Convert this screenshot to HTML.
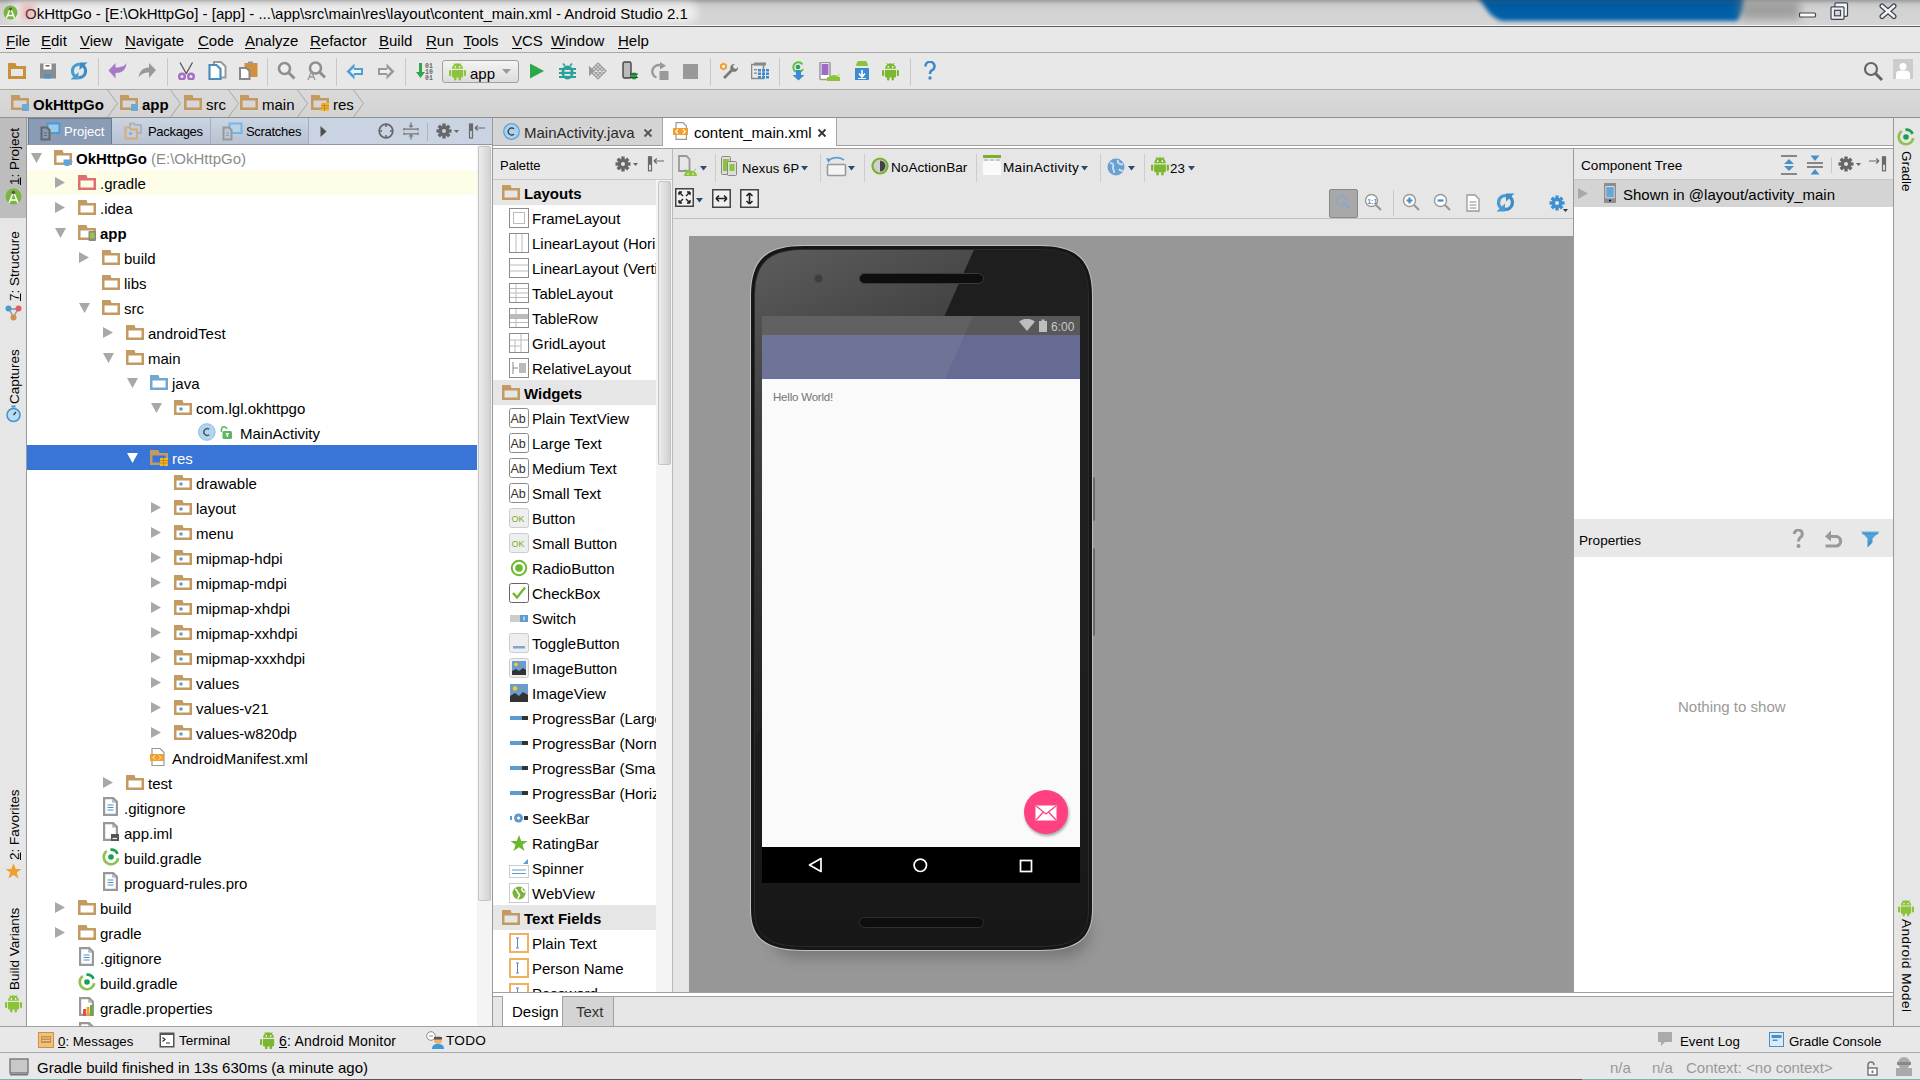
<!DOCTYPE html>
<html><head><meta charset="utf-8"><style>
html,body{margin:0;padding:0;width:1920px;height:1080px;overflow:hidden;background:#e8e8e8;font-family:"Liberation Sans", sans-serif;position:relative}
div,svg{box-sizing:border-box}
</style></head><body>
<div style="position:absolute;left:0px;top:0px;width:1920px;height:25px;background:linear-gradient(#9c9c9c,#c8c8c8 4px,#d2d2d2 9px,#d5d5d5)"></div><div style="position:absolute;left:8px;top:3px;width:690px;height:20px;background:#ededed;filter:blur(4px);border-radius:10px"></div><svg style="position:absolute;left:1465px;top:0px" width="295" height="28" viewBox="0 0 295 28"><defs><filter id="bl" x="-10%" y="-50%" width="120%" height="200%"><feGaussianBlur stdDeviation="2.2"/></filter><linearGradient id="bg1" x1="0" y1="0" x2="0" y2="1"><stop offset="0" stop-color="#1d4f7c"/><stop offset="0.35" stop-color="#065ca2"/><stop offset="1" stop-color="#0660aa"/></linearGradient></defs><path d="M12 -4H278Q281 10 272 21H38Q28 19 22 10Z" fill="url(#bg1)" filter="url(#bl)"/></svg><div style="position:absolute;left:1740px;top:0px;width:60px;height:20px;background:#8a8a8a;filter:blur(5px);opacity:.7"></div><div style="position:absolute;left:0px;top:25px;width:1920px;height:1px;background:#f4f4f4"></div><div style="position:absolute;left:0px;top:26px;width:1920px;height:1px;background:#5c5c5c"></div><div style="position:absolute;left:25px;top:6.30px;font-size:15px;line-height:15px;color:#000;font-weight:400;white-space:pre;">OkHttpGo - [E:\OkHttpGo] - [app] - ...\app\src\main\res\layout\content_main.xml - Android Studio 2.1</div><svg style="position:absolute;left:3px;top:5px" width="15" height="15" viewBox="0 0 15 15"><circle cx="7.5" cy="7.5" r="7" fill="#7ab53e"/><path d="M7.5 3L3.5 13M7.5 3L11.5 13M4.5 10.5H10.5" stroke="#fff" stroke-width="1.3" fill="none"/><circle cx="7.5" cy="4" r="1.6" fill="#555"/></svg><div style="position:absolute;left:21px;top:4px;width:14px;height:16px;background:#e88080;filter:blur(3px);opacity:.45"></div><svg style="position:absolute;left:1797px;top:11px" width="20" height="8" viewBox="0 0 20 8"><rect x="2.5" y="2" width="16" height="4" rx="1" fill="#fafafa" stroke="#3c4458" stroke-width="1.2"/></svg><svg style="position:absolute;left:1829px;top:1px" width="22" height="20" viewBox="0 0 22 20"><rect x="6" y="1.8" width="12.5" height="13.5" rx="1" fill="#f6f6f6" stroke="#3c4458" stroke-width="1.2"/><rect x="2" y="5.8" width="13" height="12.5" rx="1" fill="#f0f0f0" stroke="#3c4458" stroke-width="1.2"/><rect x="5.5" y="9.3" width="6" height="5.5" fill="#d8d8d8" stroke="#3c4458" stroke-width="1.2"/></svg><svg style="position:absolute;left:1876px;top:2px" width="24" height="18" viewBox="0 0 24 18"><path d="M6 4L18 14.5M18 4L6 14.5" stroke="#3c4458" stroke-width="5" stroke-linecap="round"/><path d="M6 4L18 14.5M18 4L6 14.5" stroke="#f4f4f4" stroke-width="2.6" stroke-linecap="round"/></svg><div style="position:absolute;left:0px;top:27px;width:1920px;height:25px;background:#e8e8e8"></div><div style="position:absolute;left:0px;top:52px;width:1920px;height:1px;background:#a8a8a8"></div><div style="position:absolute;left:6px;top:33.30px;font-size:15px;line-height:15px;color:#000;font-weight:400;white-space:pre;"><u style="text-decoration-thickness:1px;text-underline-offset:2px">F</u>ile</div><div style="position:absolute;left:41px;top:33.30px;font-size:15px;line-height:15px;color:#000;font-weight:400;white-space:pre;"><u style="text-decoration-thickness:1px;text-underline-offset:2px">E</u>dit</div><div style="position:absolute;left:80px;top:33.30px;font-size:15px;line-height:15px;color:#000;font-weight:400;white-space:pre;"><u style="text-decoration-thickness:1px;text-underline-offset:2px">V</u>iew</div><div style="position:absolute;left:125px;top:33.30px;font-size:15px;line-height:15px;color:#000;font-weight:400;white-space:pre;"><u style="text-decoration-thickness:1px;text-underline-offset:2px">N</u>avigate</div><div style="position:absolute;left:198px;top:33.30px;font-size:15px;line-height:15px;color:#000;font-weight:400;white-space:pre;"><u style="text-decoration-thickness:1px;text-underline-offset:2px">C</u>ode</div><div style="position:absolute;left:245px;top:33.30px;font-size:15px;line-height:15px;color:#000;font-weight:400;white-space:pre;"><u style="text-decoration-thickness:1px;text-underline-offset:2px">A</u>nalyze</div><div style="position:absolute;left:310px;top:33.30px;font-size:15px;line-height:15px;color:#000;font-weight:400;white-space:pre;"><u style="text-decoration-thickness:1px;text-underline-offset:2px">R</u>efactor</div><div style="position:absolute;left:379px;top:33.30px;font-size:15px;line-height:15px;color:#000;font-weight:400;white-space:pre;"><u style="text-decoration-thickness:1px;text-underline-offset:2px">B</u>uild</div><div style="position:absolute;left:426px;top:33.30px;font-size:15px;line-height:15px;color:#000;font-weight:400;white-space:pre;"><u style="text-decoration-thickness:1px;text-underline-offset:2px">R</u>un</div><div style="position:absolute;left:463.5px;top:33.30px;font-size:15px;line-height:15px;color:#000;font-weight:400;white-space:pre;"><u style="text-decoration-thickness:1px;text-underline-offset:2px">T</u>ools</div><div style="position:absolute;left:512px;top:33.30px;font-size:15px;line-height:15px;color:#000;font-weight:400;white-space:pre;"><u style="text-decoration-thickness:1px;text-underline-offset:2px">V</u>CS</div><div style="position:absolute;left:551px;top:33.30px;font-size:15px;line-height:15px;color:#000;font-weight:400;white-space:pre;"><u style="text-decoration-thickness:1px;text-underline-offset:2px">W</u>indow</div><div style="position:absolute;left:618px;top:33.30px;font-size:15px;line-height:15px;color:#000;font-weight:400;white-space:pre;"><u style="text-decoration-thickness:1px;text-underline-offset:2px">H</u>elp</div><div style="position:absolute;left:0px;top:53px;width:1920px;height:36px;background:#e8e8e8"></div><div style="position:absolute;left:0px;top:89px;width:1920px;height:1px;background:#a8a8a8"></div><div style="position:absolute;left:98px;top:58px;width:1px;height:28px;background:#c8c8c8"></div><div style="position:absolute;left:167px;top:58px;width:1px;height:28px;background:#c8c8c8"></div><div style="position:absolute;left:267px;top:58px;width:1px;height:28px;background:#c8c8c8"></div><div style="position:absolute;left:336px;top:58px;width:1px;height:28px;background:#c8c8c8"></div><div style="position:absolute;left:405px;top:58px;width:1px;height:28px;background:#c8c8c8"></div><div style="position:absolute;left:710px;top:58px;width:1px;height:28px;background:#c8c8c8"></div><div style="position:absolute;left:779px;top:58px;width:1px;height:28px;background:#c8c8c8"></div><div style="position:absolute;left:910px;top:58px;width:1px;height:28px;background:#c8c8c8"></div><div style="position:absolute;left:0px;top:90px;width:1920px;height:27px;background:linear-gradient(#dadada,#d3d3d3)"></div><div style="position:absolute;left:0px;top:117px;width:1920px;height:1px;background:#8f8f8f"></div><div style="position:absolute;left:0px;top:118px;width:26px;height:908px;background:#e6e6e6"></div><div style="position:absolute;left:0px;top:118px;width:26px;height:100px;background:#bdbdbd"></div><div style="position:absolute;left:26px;top:118px;width:1px;height:908px;background:#9a9a9a"></div><div style="position:absolute;left:1894px;top:118px;width:26px;height:908px;background:#e6e6e6"></div><div style="position:absolute;left:1893px;top:118px;width:1px;height:908px;background:#9a9a9a"></div><div style="position:absolute;left:27px;top:118px;width:466px;height:27px;background:#c9d3e2"></div><div style="position:absolute;left:27px;top:144px;width:466px;height:1px;background:#8e98a8"></div><div style="position:absolute;left:28px;top:118px;width:84px;height:26px;background:#8a9bb6;border:1px solid #6b7a93;border-bottom:none"></div><div style="position:absolute;left:112px;top:118px;width:99px;height:26px;background:linear-gradient(#cbd4e2,#b8c2d2);border-right:1px solid #a3adbd"></div><div style="position:absolute;left:211px;top:118px;width:98px;height:26px;background:linear-gradient(#cbd4e2,#b8c2d2);border-right:1px solid #a3adbd"></div><div style="position:absolute;left:64px;top:125.00px;font-size:13px;line-height:13px;color:#fff;font-weight:400;white-space:pre;">Project</div><div style="position:absolute;left:148px;top:125.00px;font-size:13px;line-height:13px;color:#000;font-weight:400;white-space:pre;letter-spacing:-0.3px">Packages</div><div style="position:absolute;left:246px;top:125.00px;font-size:13px;line-height:13px;color:#000;font-weight:400;white-space:pre;letter-spacing:-0.3px">Scratches</div><div style="position:absolute;left:27px;top:145px;width:450px;height:881px;background:#fff"></div><div style="position:absolute;left:477px;top:145px;width:15px;height:881px;background:#f4f4f4"></div><div style="position:absolute;left:478px;top:146px;width:13px;height:755px;background:linear-gradient(90deg,#ececec,#d2d2d2);border:1px solid #c4c4c4;border-radius:2px"></div><div style="position:absolute;left:492px;top:118px;width:1px;height:908px;background:#9a9a9a"></div><div style="position:absolute;left:493px;top:118px;width:1400px;height:28px;background:#e6e6e6"></div><div style="position:absolute;left:493px;top:145px;width:1400px;height:1px;background:#a0a0a0"></div><div style="position:absolute;left:493px;top:118px;width:170px;height:27px;background:#d4d4d4;border-right:1px solid #a8a8a8"></div><div style="position:absolute;left:663px;top:118px;width:174px;height:28px;background:#fff;border-right:1px solid #a8a8a8"></div><div style="position:absolute;left:524px;top:125.30px;font-size:15px;line-height:15px;color:#2a2a2a;font-weight:400;white-space:pre;">MainActivity.java</div><div style="position:absolute;left:694px;top:125.30px;font-size:15px;line-height:15px;color:#000;font-weight:400;white-space:pre;">content_main.xml</div><div style="position:absolute;left:493px;top:146px;width:1400px;height:2px;background:#fff"></div><div style="position:absolute;left:493px;top:148px;width:1400px;height:1px;background:#a0a0a0"></div><div style="position:absolute;left:493px;top:149px;width:180px;height:31px;background:#e8e8e8"></div><div style="position:absolute;left:493px;top:179px;width:180px;height:1px;background:#c8c8c8"></div><div style="position:absolute;left:500px;top:159.00px;font-size:13px;line-height:13px;color:#000;font-weight:400;white-space:pre;">Palette</div><div style="position:absolute;left:493px;top:180px;width:163px;height:812px;background:#fff"></div><div style="position:absolute;left:656px;top:180px;width:16px;height:812px;background:#f4f4f4"></div><div style="position:absolute;left:658px;top:181px;width:13px;height:284px;background:linear-gradient(90deg,#ececec,#d0d0d0);border:1px solid #c4c4c4;border-radius:2px"></div><div style="position:absolute;left:672px;top:149px;width:1px;height:844px;background:#b8b8b8"></div><div style="position:absolute;left:673px;top:149px;width:900px;height:844px;background:#e6e6e6"></div><div style="position:absolute;left:673px;top:218px;width:900px;height:1px;background:#c0c0c0"></div><div style="position:absolute;left:689px;top:236px;width:884px;height:756px;background:#979797"></div><div style="position:absolute;left:1573px;top:149px;width:1px;height:844px;background:#9a9a9a"></div><div style="position:absolute;left:1574px;top:149px;width:319px;height:30px;background:#e8e8e8"></div><div style="position:absolute;left:1574px;top:179px;width:319px;height:1px;background:#c8c8c8"></div><div style="position:absolute;left:1581px;top:159.49px;font-size:13.6px;line-height:13.6px;color:#000;font-weight:400;white-space:pre;">Component Tree</div><div style="position:absolute;left:1574px;top:180px;width:319px;height:339px;background:#fff"></div><div style="position:absolute;left:1574px;top:180px;width:319px;height:27px;background:#d4d4d4"></div><div style="position:absolute;left:1623px;top:187.30px;font-size:15px;line-height:15px;color:#000;font-weight:400;white-space:pre;">Shown in @layout/activity_main</div><div style="position:absolute;left:1574px;top:519px;width:319px;height:38px;background:#e8e8e8"></div><div style="position:absolute;left:1579px;top:533.99px;font-size:13.6px;line-height:13.6px;color:#000;font-weight:400;white-space:pre;">Properties</div><div style="position:absolute;left:1574px;top:557px;width:319px;height:435px;background:#fff"></div><div style="position:absolute;left:1678px;top:699.30px;font-size:15px;line-height:15px;color:#999;font-weight:400;white-space:pre;">Nothing to show</div><div style="position:absolute;left:493px;top:992px;width:1400px;height:1px;background:#a0a0a0"></div><div style="position:absolute;left:493px;top:993px;width:1400px;height:4px;background:#fff"></div><div style="position:absolute;left:493px;top:996px;width:1400px;height:1px;background:#a0a0a0"></div><div style="position:absolute;left:493px;top:997px;width:1400px;height:29px;background:#e6e6e6"></div><div style="position:absolute;left:502px;top:996px;width:61px;height:30px;background:#fff;border-left:1px solid #a0a0a0;border-right:1px solid #a0a0a0"></div><div style="position:absolute;left:562px;top:996px;width:52px;height:30px;background:#d4d4d4;border:1px solid #a0a0a0;border-bottom:none"></div><div style="position:absolute;left:512px;top:1004.30px;font-size:15px;line-height:15px;color:#000;font-weight:400;white-space:pre;">Design</div><div style="position:absolute;left:576px;top:1004.30px;font-size:15px;line-height:15px;color:#333;font-weight:400;white-space:pre;">Text</div><div style="position:absolute;left:0px;top:1026px;width:1920px;height:1px;background:#a0a0a0"></div><div style="position:absolute;left:0px;top:1027px;width:1920px;height:25px;background:#e8e8e8"></div><div style="position:absolute;left:0px;top:1052px;width:1920px;height:1px;background:#a8a8a8"></div><div style="position:absolute;left:58px;top:1034.74px;font-size:13.3px;line-height:13.3px;color:#000;font-weight:400;white-space:pre;"><u>0</u>: Messages</div><div style="position:absolute;left:179px;top:1034.49px;font-size:13.6px;line-height:13.6px;color:#000;font-weight:400;white-space:pre;">Terminal</div><div style="position:absolute;left:279px;top:1034.15px;font-size:14px;line-height:14px;color:#000;font-weight:400;white-space:pre;letter-spacing:0.2px"><u>6</u>: Android Monitor</div><div style="position:absolute;left:446px;top:1034.49px;font-size:13.6px;line-height:13.6px;color:#000;font-weight:400;white-space:pre;letter-spacing:0.3px">TODO</div><div style="position:absolute;left:1680px;top:1034.74px;font-size:13.3px;line-height:13.3px;color:#000;font-weight:400;white-space:pre;">Event Log</div><div style="position:absolute;left:1789px;top:1034.74px;font-size:13.3px;line-height:13.3px;color:#000;font-weight:400;white-space:pre;">Gradle Console</div><div style="position:absolute;left:0px;top:1053px;width:1920px;height:27px;background:#e8e8e8"></div><div style="position:absolute;left:37px;top:1060.30px;font-size:15px;line-height:15px;color:#000;font-weight:400;white-space:pre;">Gradle build finished in 13s 630ms (a minute ago)</div><div style="position:absolute;left:1610px;top:1060.30px;font-size:15px;line-height:15px;color:#999;font-weight:400;white-space:pre;">n/a</div><div style="position:absolute;left:1652px;top:1060.30px;font-size:15px;line-height:15px;color:#999;font-weight:400;white-space:pre;">n/a</div><div style="position:absolute;left:1686px;top:1060.30px;font-size:15px;line-height:15px;color:#999;font-weight:400;white-space:pre;">Context: &lt;no context&gt;</div><div style="position:absolute;left:0;top:0;width:477px;height:1026px;overflow:hidden"><svg style="position:absolute;left:30.5px;top:153px" width="11" height="10" viewBox="0 0 11 10"><path fill="#a8a8a8" d="M0 0H11L5.5 10Z"/></svg><svg style="position:absolute;left:54px;top:150px" width="20" height="18" viewBox="0 0 20 18"><path fill-rule="evenodd" fill="#c49a63" d="M0 0H8.5L9.5 3H18V15H0Z M2.5 5.5V12.5H15.5V5.5Z"/><path d="M9.5 9.5h7v3.5a3 3 0 0 1-3 3h-1a3 3 0 0 1-3-3z" fill="#5aa6dc"/><circle cx="16.5" cy="11.5" r="1.5" fill="none" stroke="#5aa6dc" stroke-width="1"/></svg><div style="position:absolute;left:76px;top:151.30px;font-size:15px;line-height:15px;color:#000;font-weight:400;white-space:pre;"><b>OkHttpGo</b><span style="color:#8c8c8c"> (E:\OkHttpGo)</span></div><div style="position:absolute;left:27px;top:170px;width:450px;height:25px;background:#fefde8"></div><svg style="position:absolute;left:55px;top:177.0px" width="10" height="11" viewBox="0 0 10 11"><path fill="#a8a8a8" d="M0 0L10 5.5L0 11Z"/></svg><svg style="position:absolute;left:78px;top:175px" width="20" height="18" viewBox="0 0 20 18"><path fill-rule="evenodd" fill="#dc6f6f" d="M0 0H8.5L9.5 3H18V15H0Z M2.5 5.5V12.5H15.5V5.5Z"/></svg><div style="position:absolute;left:100px;top:176.30px;font-size:15px;line-height:15px;color:#000;font-weight:400;white-space:pre;">.gradle</div><svg style="position:absolute;left:55px;top:202.0px" width="10" height="11" viewBox="0 0 10 11"><path fill="#a8a8a8" d="M0 0L10 5.5L0 11Z"/></svg><svg style="position:absolute;left:78px;top:200px" width="20" height="18" viewBox="0 0 20 18"><path fill-rule="evenodd" fill="#c49a63" d="M0 0H8.5L9.5 3H18V15H0Z M2.5 5.5V12.5H15.5V5.5Z"/></svg><div style="position:absolute;left:100px;top:201.30px;font-size:15px;line-height:15px;color:#000;font-weight:400;white-space:pre;">.idea</div><svg style="position:absolute;left:54.5px;top:228px" width="11" height="10" viewBox="0 0 11 10"><path fill="#a8a8a8" d="M0 0H11L5.5 10Z"/></svg><svg style="position:absolute;left:78px;top:225px" width="20" height="18" viewBox="0 0 20 18"><path fill-rule="evenodd" fill="#c49a63" d="M0 0H8.5L9.5 3H18V15H0Z M2.5 5.5V12.5H15.5V5.5Z"/><rect x="10.5" y="6" width="7.5" height="10" rx="1" fill="#888"/><rect x="12" y="7.5" width="4.5" height="6" fill="#9bc43f"/></svg><div style="position:absolute;left:100px;top:226.30px;font-size:15px;line-height:15px;color:#000;font-weight:400;white-space:pre;"><b>app</b></div><svg style="position:absolute;left:79px;top:252.0px" width="10" height="11" viewBox="0 0 10 11"><path fill="#a8a8a8" d="M0 0L10 5.5L0 11Z"/></svg><svg style="position:absolute;left:102px;top:250px" width="20" height="18" viewBox="0 0 20 18"><path fill-rule="evenodd" fill="#c49a63" d="M0 0H8.5L9.5 3H18V15H0Z M2.5 5.5V12.5H15.5V5.5Z"/></svg><div style="position:absolute;left:124px;top:251.30px;font-size:15px;line-height:15px;color:#000;font-weight:400;white-space:pre;">build</div><svg style="position:absolute;left:102px;top:275px" width="20" height="18" viewBox="0 0 20 18"><path fill-rule="evenodd" fill="#c49a63" d="M0 0H8.5L9.5 3H18V15H0Z M2.5 5.5V12.5H15.5V5.5Z"/></svg><div style="position:absolute;left:124px;top:276.30px;font-size:15px;line-height:15px;color:#000;font-weight:400;white-space:pre;">libs</div><svg style="position:absolute;left:78.5px;top:303px" width="11" height="10" viewBox="0 0 11 10"><path fill="#a8a8a8" d="M0 0H11L5.5 10Z"/></svg><svg style="position:absolute;left:102px;top:300px" width="20" height="18" viewBox="0 0 20 18"><path fill-rule="evenodd" fill="#c49a63" d="M0 0H8.5L9.5 3H18V15H0Z M2.5 5.5V12.5H15.5V5.5Z"/></svg><div style="position:absolute;left:124px;top:301.30px;font-size:15px;line-height:15px;color:#000;font-weight:400;white-space:pre;">src</div><svg style="position:absolute;left:103px;top:327.0px" width="10" height="11" viewBox="0 0 10 11"><path fill="#a8a8a8" d="M0 0L10 5.5L0 11Z"/></svg><svg style="position:absolute;left:126px;top:325px" width="20" height="18" viewBox="0 0 20 18"><path fill-rule="evenodd" fill="#c49a63" d="M0 0H8.5L9.5 3H18V15H0Z M2.5 5.5V12.5H15.5V5.5Z"/></svg><div style="position:absolute;left:148px;top:326.30px;font-size:15px;line-height:15px;color:#000;font-weight:400;white-space:pre;">androidTest</div><svg style="position:absolute;left:102.5px;top:353px" width="11" height="10" viewBox="0 0 11 10"><path fill="#a8a8a8" d="M0 0H11L5.5 10Z"/></svg><svg style="position:absolute;left:126px;top:350px" width="20" height="18" viewBox="0 0 20 18"><path fill-rule="evenodd" fill="#c49a63" d="M0 0H8.5L9.5 3H18V15H0Z M2.5 5.5V12.5H15.5V5.5Z"/></svg><div style="position:absolute;left:148px;top:351.30px;font-size:15px;line-height:15px;color:#000;font-weight:400;white-space:pre;">main</div><svg style="position:absolute;left:126.5px;top:378px" width="11" height="10" viewBox="0 0 11 10"><path fill="#a8a8a8" d="M0 0H11L5.5 10Z"/></svg><svg style="position:absolute;left:150px;top:375px" width="20" height="18" viewBox="0 0 20 18"><path fill-rule="evenodd" fill="#72a8cf" d="M0 0H8.5L9.5 3H18V15H0Z M2.5 5.5V12.5H15.5V5.5Z"/></svg><div style="position:absolute;left:172px;top:376.30px;font-size:15px;line-height:15px;color:#000;font-weight:400;white-space:pre;">java</div><svg style="position:absolute;left:150.5px;top:403px" width="11" height="10" viewBox="0 0 11 10"><path fill="#a8a8a8" d="M0 0H11L5.5 10Z"/></svg><svg style="position:absolute;left:174px;top:400px" width="20" height="18" viewBox="0 0 20 18"><path fill-rule="evenodd" fill="#c49a63" d="M0 0H8.5L9.5 3H18V15H0Z M2.5 5.5V12.5H15.5V5.5Z"/><circle cx="7" cy="9" r="1.8" fill="#5a9fd4"/></svg><div style="position:absolute;left:196px;top:401.30px;font-size:15px;line-height:15px;color:#000;font-weight:400;white-space:pre;">com.lgl.okhttpgo</div><svg style="position:absolute;left:198px;top:423px" width="36" height="19" viewBox="0 0 36 19"><circle cx="8.8" cy="9" r="8.3" fill="#b2d6f2" stroke="#86bde6" stroke-width="1"/><path d="M11.3 6.3A3.4 3.4 0 1 0 11.3 11.7" stroke="#555" stroke-width="1.4" fill="none"/><path d="M23.5 9V6.3A2.6 2.6 0 0 1 28.7 6.3" stroke="#5cb860" stroke-width="1.5" fill="none"/><rect x="24.5" y="8" width="9.5" height="8" rx="1.5" fill="#5cb860"/><rect x="27.7" y="10" width="3.2" height="1.4" fill="#fff"/><rect x="28.6" y="10" width="1.4" height="3.8" fill="#fff"/></svg><div style="position:absolute;left:220px;top:426.30px;font-size:15px;line-height:15px;color:#000;font-weight:400;white-space:pre;"><span style="position:relative;left:20px">MainActivity</span></div><div style="position:absolute;left:27px;top:445px;width:450px;height:25px;background:#3875d7"></div><svg style="position:absolute;left:126.5px;top:453px" width="11" height="10" viewBox="0 0 11 10"><path fill="#fff" d="M0 0H11L5.5 10Z"/></svg><svg style="position:absolute;left:150px;top:450px" width="20" height="18" viewBox="0 0 20 18"><path fill-rule="evenodd" fill="#c49a63" d="M0 0H8.5L9.5 3H18V15H0Z M2.5 5.5V12.5H15.5V5.5Z"/><rect x="10" y="8" width="8" height="8" fill="#f0b830"/><path d="M10 10.5h8M10 13h8M13.5 8v8" stroke="#c08010" stroke-width="0.8"/></svg><div style="position:absolute;left:172px;top:451.30px;font-size:15px;line-height:15px;color:#fff;font-weight:400;white-space:pre;">res</div><svg style="position:absolute;left:174px;top:475px" width="20" height="18" viewBox="0 0 20 18"><path fill-rule="evenodd" fill="#c49a63" d="M0 0H8.5L9.5 3H18V15H0Z M2.5 5.5V12.5H15.5V5.5Z"/><circle cx="7" cy="9" r="1.8" fill="#5a9fd4"/></svg><div style="position:absolute;left:196px;top:476.30px;font-size:15px;line-height:15px;color:#000;font-weight:400;white-space:pre;">drawable</div><svg style="position:absolute;left:151px;top:502.0px" width="10" height="11" viewBox="0 0 10 11"><path fill="#a8a8a8" d="M0 0L10 5.5L0 11Z"/></svg><svg style="position:absolute;left:174px;top:500px" width="20" height="18" viewBox="0 0 20 18"><path fill-rule="evenodd" fill="#c49a63" d="M0 0H8.5L9.5 3H18V15H0Z M2.5 5.5V12.5H15.5V5.5Z"/><circle cx="7" cy="9" r="1.8" fill="#5a9fd4"/></svg><div style="position:absolute;left:196px;top:501.30px;font-size:15px;line-height:15px;color:#000;font-weight:400;white-space:pre;">layout</div><svg style="position:absolute;left:151px;top:527.0px" width="10" height="11" viewBox="0 0 10 11"><path fill="#a8a8a8" d="M0 0L10 5.5L0 11Z"/></svg><svg style="position:absolute;left:174px;top:525px" width="20" height="18" viewBox="0 0 20 18"><path fill-rule="evenodd" fill="#c49a63" d="M0 0H8.5L9.5 3H18V15H0Z M2.5 5.5V12.5H15.5V5.5Z"/><circle cx="7" cy="9" r="1.8" fill="#5a9fd4"/></svg><div style="position:absolute;left:196px;top:526.30px;font-size:15px;line-height:15px;color:#000;font-weight:400;white-space:pre;">menu</div><svg style="position:absolute;left:151px;top:552.0px" width="10" height="11" viewBox="0 0 10 11"><path fill="#a8a8a8" d="M0 0L10 5.5L0 11Z"/></svg><svg style="position:absolute;left:174px;top:550px" width="20" height="18" viewBox="0 0 20 18"><path fill-rule="evenodd" fill="#c49a63" d="M0 0H8.5L9.5 3H18V15H0Z M2.5 5.5V12.5H15.5V5.5Z"/><circle cx="7" cy="9" r="1.8" fill="#5a9fd4"/></svg><div style="position:absolute;left:196px;top:551.30px;font-size:15px;line-height:15px;color:#000;font-weight:400;white-space:pre;">mipmap-hdpi</div><svg style="position:absolute;left:151px;top:577.0px" width="10" height="11" viewBox="0 0 10 11"><path fill="#a8a8a8" d="M0 0L10 5.5L0 11Z"/></svg><svg style="position:absolute;left:174px;top:575px" width="20" height="18" viewBox="0 0 20 18"><path fill-rule="evenodd" fill="#c49a63" d="M0 0H8.5L9.5 3H18V15H0Z M2.5 5.5V12.5H15.5V5.5Z"/><circle cx="7" cy="9" r="1.8" fill="#5a9fd4"/></svg><div style="position:absolute;left:196px;top:576.30px;font-size:15px;line-height:15px;color:#000;font-weight:400;white-space:pre;">mipmap-mdpi</div><svg style="position:absolute;left:151px;top:602.0px" width="10" height="11" viewBox="0 0 10 11"><path fill="#a8a8a8" d="M0 0L10 5.5L0 11Z"/></svg><svg style="position:absolute;left:174px;top:600px" width="20" height="18" viewBox="0 0 20 18"><path fill-rule="evenodd" fill="#c49a63" d="M0 0H8.5L9.5 3H18V15H0Z M2.5 5.5V12.5H15.5V5.5Z"/><circle cx="7" cy="9" r="1.8" fill="#5a9fd4"/></svg><div style="position:absolute;left:196px;top:601.30px;font-size:15px;line-height:15px;color:#000;font-weight:400;white-space:pre;">mipmap-xhdpi</div><svg style="position:absolute;left:151px;top:627.0px" width="10" height="11" viewBox="0 0 10 11"><path fill="#a8a8a8" d="M0 0L10 5.5L0 11Z"/></svg><svg style="position:absolute;left:174px;top:625px" width="20" height="18" viewBox="0 0 20 18"><path fill-rule="evenodd" fill="#c49a63" d="M0 0H8.5L9.5 3H18V15H0Z M2.5 5.5V12.5H15.5V5.5Z"/><circle cx="7" cy="9" r="1.8" fill="#5a9fd4"/></svg><div style="position:absolute;left:196px;top:626.30px;font-size:15px;line-height:15px;color:#000;font-weight:400;white-space:pre;">mipmap-xxhdpi</div><svg style="position:absolute;left:151px;top:652.0px" width="10" height="11" viewBox="0 0 10 11"><path fill="#a8a8a8" d="M0 0L10 5.5L0 11Z"/></svg><svg style="position:absolute;left:174px;top:650px" width="20" height="18" viewBox="0 0 20 18"><path fill-rule="evenodd" fill="#c49a63" d="M0 0H8.5L9.5 3H18V15H0Z M2.5 5.5V12.5H15.5V5.5Z"/><circle cx="7" cy="9" r="1.8" fill="#5a9fd4"/></svg><div style="position:absolute;left:196px;top:651.30px;font-size:15px;line-height:15px;color:#000;font-weight:400;white-space:pre;">mipmap-xxxhdpi</div><svg style="position:absolute;left:151px;top:677.0px" width="10" height="11" viewBox="0 0 10 11"><path fill="#a8a8a8" d="M0 0L10 5.5L0 11Z"/></svg><svg style="position:absolute;left:174px;top:675px" width="20" height="18" viewBox="0 0 20 18"><path fill-rule="evenodd" fill="#c49a63" d="M0 0H8.5L9.5 3H18V15H0Z M2.5 5.5V12.5H15.5V5.5Z"/><circle cx="7" cy="9" r="1.8" fill="#5a9fd4"/></svg><div style="position:absolute;left:196px;top:676.30px;font-size:15px;line-height:15px;color:#000;font-weight:400;white-space:pre;">values</div><svg style="position:absolute;left:151px;top:702.0px" width="10" height="11" viewBox="0 0 10 11"><path fill="#a8a8a8" d="M0 0L10 5.5L0 11Z"/></svg><svg style="position:absolute;left:174px;top:700px" width="20" height="18" viewBox="0 0 20 18"><path fill-rule="evenodd" fill="#c49a63" d="M0 0H8.5L9.5 3H18V15H0Z M2.5 5.5V12.5H15.5V5.5Z"/><circle cx="7" cy="9" r="1.8" fill="#5a9fd4"/></svg><div style="position:absolute;left:196px;top:701.30px;font-size:15px;line-height:15px;color:#000;font-weight:400;white-space:pre;">values-v21</div><svg style="position:absolute;left:151px;top:727.0px" width="10" height="11" viewBox="0 0 10 11"><path fill="#a8a8a8" d="M0 0L10 5.5L0 11Z"/></svg><svg style="position:absolute;left:174px;top:725px" width="20" height="18" viewBox="0 0 20 18"><path fill-rule="evenodd" fill="#c49a63" d="M0 0H8.5L9.5 3H18V15H0Z M2.5 5.5V12.5H15.5V5.5Z"/><circle cx="7" cy="9" r="1.8" fill="#5a9fd4"/></svg><div style="position:absolute;left:196px;top:726.30px;font-size:15px;line-height:15px;color:#000;font-weight:400;white-space:pre;">values-w820dp</div><svg style="position:absolute;left:150px;top:748px" width="18" height="18" viewBox="0 0 18 18"><path d="M2 0.5H10L14 4.5V17.5H2Z" fill="#fff" stroke="#999" stroke-width="1.2"/><rect x="0" y="6" width="14" height="7" fill="#f0a030"/><path d="M5 7.5L3 9.5L5 11.5M9 7.5L11 9.5L9 11.5" stroke="#fff" stroke-width="1" fill="none"/></svg><div style="position:absolute;left:172px;top:751.30px;font-size:15px;line-height:15px;color:#000;font-weight:400;white-space:pre;">AndroidManifest.xml</div><svg style="position:absolute;left:103px;top:777.0px" width="10" height="11" viewBox="0 0 10 11"><path fill="#a8a8a8" d="M0 0L10 5.5L0 11Z"/></svg><svg style="position:absolute;left:126px;top:775px" width="20" height="18" viewBox="0 0 20 18"><path fill-rule="evenodd" fill="#c49a63" d="M0 0H8.5L9.5 3H18V15H0Z M2.5 5.5V12.5H15.5V5.5Z"/></svg><div style="position:absolute;left:148px;top:776.30px;font-size:15px;line-height:15px;color:#000;font-weight:400;white-space:pre;">test</div><svg style="position:absolute;left:102px;top:797px" width="18" height="19" viewBox="0 0 18 19"><path d="M2.1 1.1H11.2L14.9 4.8V17.9H2.1Z" fill="#fff" stroke="#999" stroke-width="2.2"/><path d="M11 1.5V5H14.5" stroke="#999" stroke-width="1.2" fill="none"/><path d="M5.5 8H11.5M5.5 10.5H11.5M5.5 13H11.5" stroke="#4a90c8" stroke-width="1.2"/></svg><div style="position:absolute;left:124px;top:801.30px;font-size:15px;line-height:15px;color:#000;font-weight:400;white-space:pre;">.gitignore</div><svg style="position:absolute;left:102px;top:822px" width="18" height="19" viewBox="0 0 18 19"><path d="M2.1 1.1H11.2L14.9 4.8V17.9H2.1Z" fill="#fff" stroke="#999" stroke-width="2.2"/><path d="M11 1.5V5H14.5" stroke="#999" stroke-width="1.2" fill="none"/><rect x="9" y="12" width="8" height="7" fill="#555"/><path d="M10.5 16.5H15" stroke="#eee" stroke-width="1.2"/></svg><div style="position:absolute;left:124px;top:826.30px;font-size:15px;line-height:15px;color:#000;font-weight:400;white-space:pre;">app.iml</div><svg style="position:absolute;left:102px;top:848px" width="18" height="18" viewBox="0 0 18 18"><path d="M16.2 10.3A7.3 7.3 0 1 1 4.8 3.0" stroke="#8fc050" stroke-width="2.6" fill="none"/><path d="M8.4 1.7A7.3 7.3 0 0 1 15.6 5.9" stroke="#18a050" stroke-width="2.6" fill="none"/><circle cx="9" cy="9" r="2.8" fill="#18a050"/></svg><div style="position:absolute;left:124px;top:851.30px;font-size:15px;line-height:15px;color:#000;font-weight:400;white-space:pre;">build.gradle</div><svg style="position:absolute;left:102px;top:872px" width="18" height="19" viewBox="0 0 18 19"><path d="M2.1 1.1H11.2L14.9 4.8V17.9H2.1Z" fill="#fff" stroke="#999" stroke-width="2.2"/><path d="M11 1.5V5H14.5" stroke="#999" stroke-width="1.2" fill="none"/><path d="M5.5 8H11.5M5.5 10.5H11.5M5.5 13H11.5" stroke="#4a90c8" stroke-width="1.2"/></svg><div style="position:absolute;left:124px;top:876.30px;font-size:15px;line-height:15px;color:#000;font-weight:400;white-space:pre;">proguard-rules.pro</div><svg style="position:absolute;left:55px;top:902.0px" width="10" height="11" viewBox="0 0 10 11"><path fill="#a8a8a8" d="M0 0L10 5.5L0 11Z"/></svg><svg style="position:absolute;left:78px;top:900px" width="20" height="18" viewBox="0 0 20 18"><path fill-rule="evenodd" fill="#c49a63" d="M0 0H8.5L9.5 3H18V15H0Z M2.5 5.5V12.5H15.5V5.5Z"/></svg><div style="position:absolute;left:100px;top:901.30px;font-size:15px;line-height:15px;color:#000;font-weight:400;white-space:pre;">build</div><svg style="position:absolute;left:55px;top:927.0px" width="10" height="11" viewBox="0 0 10 11"><path fill="#a8a8a8" d="M0 0L10 5.5L0 11Z"/></svg><svg style="position:absolute;left:78px;top:925px" width="20" height="18" viewBox="0 0 20 18"><path fill-rule="evenodd" fill="#c49a63" d="M0 0H8.5L9.5 3H18V15H0Z M2.5 5.5V12.5H15.5V5.5Z"/></svg><div style="position:absolute;left:100px;top:926.30px;font-size:15px;line-height:15px;color:#000;font-weight:400;white-space:pre;">gradle</div><svg style="position:absolute;left:78px;top:947px" width="18" height="19" viewBox="0 0 18 19"><path d="M2.1 1.1H11.2L14.9 4.8V17.9H2.1Z" fill="#fff" stroke="#999" stroke-width="2.2"/><path d="M11 1.5V5H14.5" stroke="#999" stroke-width="1.2" fill="none"/><path d="M5.5 8H11.5M5.5 10.5H11.5M5.5 13H11.5" stroke="#4a90c8" stroke-width="1.2"/></svg><div style="position:absolute;left:100px;top:951.30px;font-size:15px;line-height:15px;color:#000;font-weight:400;white-space:pre;">.gitignore</div><svg style="position:absolute;left:78px;top:973px" width="18" height="18" viewBox="0 0 18 18"><path d="M16.2 10.3A7.3 7.3 0 1 1 4.8 3.0" stroke="#8fc050" stroke-width="2.6" fill="none"/><path d="M8.4 1.7A7.3 7.3 0 0 1 15.6 5.9" stroke="#18a050" stroke-width="2.6" fill="none"/><circle cx="9" cy="9" r="2.8" fill="#18a050"/></svg><div style="position:absolute;left:100px;top:976.30px;font-size:15px;line-height:15px;color:#000;font-weight:400;white-space:pre;">build.gradle</div><svg style="position:absolute;left:78px;top:997px" width="18" height="19" viewBox="0 0 18 19"><path d="M2.1 1.1H11.2L14.9 4.8V17.9H2.1Z" fill="#fff" stroke="#999" stroke-width="2.2"/><path d="M11 1.5V5H14.5" stroke="#999" stroke-width="1.2" fill="none"/><rect x="5" y="12" width="3" height="7" fill="#e05050"/><rect x="8.5" y="10" width="3" height="9" fill="#f0a030"/><rect x="12" y="8" width="3" height="11" fill="#60b040"/></svg><div style="position:absolute;left:100px;top:1001.30px;font-size:15px;line-height:15px;color:#000;font-weight:400;white-space:pre;">gradle.properties</div><svg style="position:absolute;left:78px;top:1022px" width="18" height="19" viewBox="0 0 18 19"><path d="M2.1 1.1H11.2L14.9 4.8V17.9H2.1Z" fill="#fff" stroke="#999" stroke-width="2.2"/><path d="M11 1.5V5H14.5" stroke="#999" stroke-width="1.2" fill="none"/><path d="M5.5 8H11.5M5.5 10.5H11.5M5.5 13H11.5" stroke="#4a90c8" stroke-width="1.2"/></svg><div style="position:absolute;left:100px;top:1026.30px;font-size:15px;line-height:15px;color:#000;font-weight:400;white-space:pre;">settings.gradle</div></div><div style="position:absolute;left:0;top:0;width:656px;height:992px;overflow:hidden"><div style="position:absolute;left:493px;top:180px;width:163px;height:25px;background:#e6e6e6"></div><svg style="position:absolute;left:502px;top:185px" width="20" height="18" viewBox="0 0 20 18"><path fill-rule="evenodd" fill="#c49a63" d="M0 0H8.5L9.5 3H18V15H0Z M2.5 5.5V12.5H15.5V5.5Z"/></svg><div style="position:absolute;left:524px;top:186.30px;font-size:15px;line-height:15px;color:#000;font-weight:700;white-space:pre;">Layouts</div><svg style="position:absolute;left:509px;top:208px" width="20" height="20" viewBox="0 0 20 20"><rect x="0.5" y="0.5" width="19" height="19" fill="#fff" stroke="#8c8c8c" stroke-width="1"/><rect x="4.5" y="4.5" width="11" height="11" fill="none" stroke="#bbb"/></svg><div style="position:absolute;left:532px;top:210.80px;font-size:15px;line-height:15px;color:#000;font-weight:400;white-space:pre;">FrameLayout</div><svg style="position:absolute;left:509px;top:233px" width="20" height="20" viewBox="0 0 20 20"><rect x="0.5" y="0.5" width="19" height="19" fill="#fff" stroke="#8c8c8c" stroke-width="1"/><path d="M7 1V19M13 1V19" stroke="#bbb"/></svg><div style="position:absolute;left:532px;top:235.80px;font-size:15px;line-height:15px;color:#000;font-weight:400;white-space:pre;">LinearLayout (Horizontal)</div><svg style="position:absolute;left:509px;top:258px" width="20" height="20" viewBox="0 0 20 20"><rect x="0.5" y="0.5" width="19" height="19" fill="#fff" stroke="#8c8c8c" stroke-width="1"/><path d="M1 7H19M1 13H19" stroke="#bbb"/></svg><div style="position:absolute;left:532px;top:260.80px;font-size:15px;line-height:15px;color:#000;font-weight:400;white-space:pre;">LinearLayout (Vertical)</div><svg style="position:absolute;left:509px;top:283px" width="20" height="20" viewBox="0 0 20 20"><rect x="0.5" y="0.5" width="19" height="19" fill="#fff" stroke="#8c8c8c" stroke-width="1"/><path d="M1 5.5H19M1 10H19M1 14.5H19M7 1V19" stroke="#bbb"/></svg><div style="position:absolute;left:532px;top:285.80px;font-size:15px;line-height:15px;color:#000;font-weight:400;white-space:pre;">TableLayout</div><svg style="position:absolute;left:509px;top:308px" width="20" height="20" viewBox="0 0 20 20"><rect x="0.5" y="0.5" width="19" height="19" fill="#fff" stroke="#8c8c8c" stroke-width="1"/><rect x="1" y="6" width="18" height="5" fill="#bbb"/><path d="M1 14.5H19M7 1V6M7 11V19" stroke="#bbb"/></svg><div style="position:absolute;left:532px;top:310.80px;font-size:15px;line-height:15px;color:#000;font-weight:400;white-space:pre;">TableRow</div><svg style="position:absolute;left:509px;top:333px" width="20" height="20" viewBox="0 0 20 20"><rect x="0.5" y="0.5" width="19" height="19" fill="#fff" stroke="#8c8c8c" stroke-width="1"/><path d="M1 7H19M1 13H12M12 1V19M6 7V19" stroke="#bbb"/></svg><div style="position:absolute;left:532px;top:335.80px;font-size:15px;line-height:15px;color:#000;font-weight:400;white-space:pre;">GridLayout</div><svg style="position:absolute;left:509px;top:358px" width="20" height="20" viewBox="0 0 20 20"><rect x="0.5" y="0.5" width="19" height="19" fill="#fff" stroke="#8c8c8c" stroke-width="1"/><path d="M4 4V16M4 10H9" stroke="#888"/><rect x="10" y="5" width="7" height="10" fill="#bbb"/></svg><div style="position:absolute;left:532px;top:360.80px;font-size:15px;line-height:15px;color:#000;font-weight:400;white-space:pre;">RelativeLayout</div><div style="position:absolute;left:493px;top:380px;width:163px;height:25px;background:#e6e6e6"></div><svg style="position:absolute;left:502px;top:385px" width="20" height="18" viewBox="0 0 20 18"><path fill-rule="evenodd" fill="#c49a63" d="M0 0H8.5L9.5 3H18V15H0Z M2.5 5.5V12.5H15.5V5.5Z"/></svg><div style="position:absolute;left:524px;top:386.30px;font-size:15px;line-height:15px;color:#000;font-weight:700;white-space:pre;">Widgets</div><svg style="position:absolute;left:509px;top:408px" width="20" height="20" viewBox="0 0 20 20"><rect x="0.5" y="0.5" width="19" height="19" rx="2" fill="#fff" stroke="#8c8c8c"/><text x="1.5" y="14.5" font-size="12.5" font-family="Liberation Sans" fill="#333">Ab</text></svg><div style="position:absolute;left:532px;top:410.80px;font-size:15px;line-height:15px;color:#000;font-weight:400;white-space:pre;">Plain TextView</div><svg style="position:absolute;left:509px;top:433px" width="20" height="20" viewBox="0 0 20 20"><rect x="0.5" y="0.5" width="19" height="19" rx="2" fill="#fff" stroke="#8c8c8c"/><text x="1.5" y="14.5" font-size="12.5" font-family="Liberation Sans" fill="#333">Ab</text></svg><div style="position:absolute;left:532px;top:435.80px;font-size:15px;line-height:15px;color:#000;font-weight:400;white-space:pre;">Large Text</div><svg style="position:absolute;left:509px;top:458px" width="20" height="20" viewBox="0 0 20 20"><rect x="0.5" y="0.5" width="19" height="19" rx="2" fill="#fff" stroke="#8c8c8c"/><text x="1.5" y="14.5" font-size="12.5" font-family="Liberation Sans" fill="#333">Ab</text></svg><div style="position:absolute;left:532px;top:460.80px;font-size:15px;line-height:15px;color:#000;font-weight:400;white-space:pre;">Medium Text</div><svg style="position:absolute;left:509px;top:483px" width="20" height="20" viewBox="0 0 20 20"><rect x="0.5" y="0.5" width="19" height="19" rx="2" fill="#fff" stroke="#8c8c8c"/><text x="1.5" y="14.5" font-size="12.5" font-family="Liberation Sans" fill="#333">Ab</text></svg><div style="position:absolute;left:532px;top:485.80px;font-size:15px;line-height:15px;color:#000;font-weight:400;white-space:pre;">Small Text</div><svg style="position:absolute;left:509px;top:508px" width="20" height="20" viewBox="0 0 20 20"><rect x="0.5" y="0.5" width="19" height="19" rx="2" fill="#eee" stroke="#ccc"/><text x="2.5" y="13.5" font-size="9" font-family="Liberation Sans" fill="#7ab020">OK</text></svg><div style="position:absolute;left:532px;top:510.80px;font-size:15px;line-height:15px;color:#000;font-weight:400;white-space:pre;">Button</div><svg style="position:absolute;left:509px;top:533px" width="20" height="20" viewBox="0 0 20 20"><rect x="0.5" y="0.5" width="19" height="19" rx="2" fill="#eee" stroke="#ccc"/><text x="2.5" y="13.5" font-size="9" font-family="Liberation Sans" fill="#7ab020">OK</text></svg><div style="position:absolute;left:532px;top:535.80px;font-size:15px;line-height:15px;color:#000;font-weight:400;white-space:pre;">Small Button</div><svg style="position:absolute;left:509px;top:558px" width="20" height="20" viewBox="0 0 20 20"><circle cx="10" cy="10" r="7.2" fill="#fff" stroke="#6bb82e" stroke-width="2"/><circle cx="10" cy="10" r="3.8" fill="#6bb82e"/></svg><div style="position:absolute;left:532px;top:560.80px;font-size:15px;line-height:15px;color:#000;font-weight:400;white-space:pre;">RadioButton</div><svg style="position:absolute;left:509px;top:583px" width="20" height="20" viewBox="0 0 20 20"><rect x="0.5" y="0.5" width="19" height="19" rx="2" fill="#fff" stroke="#666"/><path d="M4 10L8 14.5L16 4.5" stroke="#6bb82e" stroke-width="2.4" fill="none"/></svg><div style="position:absolute;left:532px;top:585.80px;font-size:15px;line-height:15px;color:#000;font-weight:400;white-space:pre;">CheckBox</div><svg style="position:absolute;left:509px;top:608px" width="20" height="20" viewBox="0 0 20 20"><rect x="1" y="7" width="18" height="7" fill="#ccc"/><rect x="11" y="7" width="8" height="7" fill="#5c9ad0"/><rect x="14.5" y="8.5" width="1" height="4" fill="#fff"/></svg><div style="position:absolute;left:532px;top:610.80px;font-size:15px;line-height:15px;color:#000;font-weight:400;white-space:pre;">Switch</div><svg style="position:absolute;left:509px;top:633px" width="20" height="20" viewBox="0 0 20 20"><rect x="0.5" y="0.5" width="19" height="19" rx="2" fill="#eee" stroke="#ccc"/><rect x="4" y="13" width="12" height="2.5" fill="#7aa8d4"/></svg><div style="position:absolute;left:532px;top:635.80px;font-size:15px;line-height:15px;color:#000;font-weight:400;white-space:pre;">ToggleButton</div><svg style="position:absolute;left:509px;top:658px" width="20" height="20" viewBox="0 0 20 20"><rect x="0.5" y="0.5" width="19" height="19" rx="2" fill="#eee" stroke="#ccc"/><rect x="3" y="3" width="14" height="14" fill="#6d9ccc"/><circle cx="7" cy="6.5" r="1.8" fill="#f5d020"/><path d="M3 17V13L7 11L10 13L14 10L17 12V17Z" fill="#333"/></svg><div style="position:absolute;left:532px;top:660.80px;font-size:15px;line-height:15px;color:#000;font-weight:400;white-space:pre;">ImageButton</div><svg style="position:absolute;left:509px;top:683px" width="20" height="20" viewBox="0 0 20 20"><rect x="1" y="1" width="18" height="18" fill="#6d9ccc"/><circle cx="6" cy="5.5" r="2.2" fill="#f5d020"/><path d="M1 19V13L6 10L10 13L14 9L19 12V19Z" fill="#333"/></svg><div style="position:absolute;left:532px;top:685.80px;font-size:15px;line-height:15px;color:#000;font-weight:400;white-space:pre;">ImageView</div><svg style="position:absolute;left:509px;top:708px" width="20" height="20" viewBox="0 0 20 20"><rect x="1" y="8" width="12" height="4" fill="#5c9ad0"/><rect x="13" y="8" width="6" height="4" fill="#333"/></svg><div style="position:absolute;left:532px;top:710.80px;font-size:15px;line-height:15px;color:#000;font-weight:400;white-space:pre;">ProgressBar (Large)</div><svg style="position:absolute;left:509px;top:733px" width="20" height="20" viewBox="0 0 20 20"><rect x="1" y="8" width="12" height="4" fill="#5c9ad0"/><rect x="13" y="8" width="6" height="4" fill="#333"/></svg><div style="position:absolute;left:532px;top:735.80px;font-size:15px;line-height:15px;color:#000;font-weight:400;white-space:pre;">ProgressBar (Normal)</div><svg style="position:absolute;left:509px;top:758px" width="20" height="20" viewBox="0 0 20 20"><rect x="1" y="8" width="12" height="4" fill="#5c9ad0"/><rect x="13" y="8" width="6" height="4" fill="#333"/></svg><div style="position:absolute;left:532px;top:760.80px;font-size:15px;line-height:15px;color:#000;font-weight:400;white-space:pre;">ProgressBar (Small)</div><svg style="position:absolute;left:509px;top:783px" width="20" height="20" viewBox="0 0 20 20"><rect x="1" y="8" width="12" height="4" fill="#5c9ad0"/><rect x="13" y="8" width="6" height="4" fill="#333"/></svg><div style="position:absolute;left:532px;top:785.80px;font-size:15px;line-height:15px;color:#000;font-weight:400;white-space:pre;">ProgressBar (Horizontal)</div><svg style="position:absolute;left:509px;top:808px" width="20" height="20" viewBox="0 0 20 20"><rect x="1" y="8" width="2" height="4" fill="#5c9ad0"/><rect x="15" y="8" width="4" height="4" fill="#333"/><circle cx="9.5" cy="10" r="4.5" fill="#5c9ad0"/><circle cx="9.5" cy="10" r="1.5" fill="#fff"/></svg><div style="position:absolute;left:532px;top:810.80px;font-size:15px;line-height:15px;color:#000;font-weight:400;white-space:pre;">SeekBar</div><svg style="position:absolute;left:509px;top:833px" width="20" height="20" viewBox="0 0 20 20"><path d="M10 2L12.2 8H18.5L13.5 11.8L15.5 18L10 14.2L4.5 18L6.5 11.8L1.5 8H7.8Z" fill="#6bb82e"/></svg><div style="position:absolute;left:532px;top:835.80px;font-size:15px;line-height:15px;color:#000;font-weight:400;white-space:pre;">RatingBar</div><svg style="position:absolute;left:509px;top:858px" width="20" height="20" viewBox="0 0 20 20"><rect x="0.5" y="7.5" width="19" height="12" fill="#fff" stroke="#ccc"/><path d="M3 12H17M3 15.5H17" stroke="#5c9ad0"/><path d="M19 1V6H14Z" fill="#5c9ad0"/></svg><div style="position:absolute;left:532px;top:860.80px;font-size:15px;line-height:15px;color:#000;font-weight:400;white-space:pre;">Spinner</div><svg style="position:absolute;left:509px;top:883px" width="20" height="20" viewBox="0 0 20 20"><rect x="0.5" y="0.5" width="19" height="19" fill="#fff" stroke="#ccc"/><circle cx="10" cy="10" r="6.5" fill="#7ab33e"/><path d="M6 6C9 7 8 10 10 11S8 15 9 16M13 5C12 8 15 9 16 9" stroke="#fff" stroke-width="1.5" fill="none"/></svg><div style="position:absolute;left:532px;top:885.80px;font-size:15px;line-height:15px;color:#000;font-weight:400;white-space:pre;">WebView</div><div style="position:absolute;left:493px;top:905px;width:163px;height:25px;background:#e6e6e6"></div><svg style="position:absolute;left:502px;top:910px" width="20" height="18" viewBox="0 0 20 18"><path fill-rule="evenodd" fill="#c49a63" d="M0 0H8.5L9.5 3H18V15H0Z M2.5 5.5V12.5H15.5V5.5Z"/></svg><div style="position:absolute;left:524px;top:911.30px;font-size:15px;line-height:15px;color:#000;font-weight:700;white-space:pre;">Text Fields</div><svg style="position:absolute;left:509px;top:933px" width="20" height="20" viewBox="0 0 20 20"><rect x="1" y="1" width="18" height="18" fill="#fff" stroke="#f0b060" stroke-width="2"/><path d="M7 5H10M8.5 5V15M7 15H10" stroke="#5c8ac0" stroke-width="1"/></svg><div style="position:absolute;left:532px;top:935.80px;font-size:15px;line-height:15px;color:#000;font-weight:400;white-space:pre;">Plain Text</div><svg style="position:absolute;left:509px;top:958px" width="20" height="20" viewBox="0 0 20 20"><rect x="1" y="1" width="18" height="18" fill="#fff" stroke="#f0b060" stroke-width="2"/><path d="M7 5H10M8.5 5V15M7 15H10" stroke="#5c8ac0" stroke-width="1"/></svg><div style="position:absolute;left:532px;top:960.80px;font-size:15px;line-height:15px;color:#000;font-weight:400;white-space:pre;">Person Name</div><svg style="position:absolute;left:509px;top:983px" width="20" height="20" viewBox="0 0 20 20"><rect x="1" y="1" width="18" height="18" fill="#fff" stroke="#f0b060" stroke-width="2"/><path d="M7 5H10M8.5 5V15M7 15H10" stroke="#5c8ac0" stroke-width="1"/></svg><div style="position:absolute;left:532px;top:985.80px;font-size:15px;line-height:15px;color:#000;font-weight:400;white-space:pre;">Password</div></div><div style="position:absolute;left:770px;top:905px;width:320px;height:52px;background:rgba(0,0,0,.22);filter:blur(7px);border-radius:40px"></div><div style="position:absolute;left:1091px;top:477px;width:4px;height:44px;background:#6a6a6a;border-radius:0 2px 2px 0"></div><div style="position:absolute;left:1091px;top:548px;width:4px;height:88px;background:#6a6a6a;border-radius:0 2px 2px 0"></div><svg style="position:absolute;left:750px;top:245px" width="343" height="706" viewBox="0 0 343 706"><defs><linearGradient id="gl" gradientUnits="userSpaceOnUse" x1="0" y1="0" x2="200" y2="420"><stop offset="0" stop-color="#5e5e5e"/><stop offset="0.35" stop-color="#404040"/><stop offset="1" stop-color="#1e1e1e"/></linearGradient><linearGradient id="bd" x1="0" y1="0" x2="0" y2="1"><stop offset="0.6" stop-color="#1e1e1e"/><stop offset="1" stop-color="#171717"/></linearGradient><clipPath id="pc"><path d="M54 5H289C324.28 5 338 17.880000000000003 338 51V664C338 690.64 324.28 701 289 701H54C18.72 701 5 690.64 5 664V51C5 17.880000000000003 18.72 5 54 5Z"/></clipPath></defs><path d="M54 0H289C327.88 0 343 14.280000000000001 343 51V664C343 694.24 327.88 706 289 706H54C15.120000000000005 706 0 694.24 0 664V51C0 14.280000000000001 15.120000000000005 0 54 0Z" fill="#c0c0c0"/><path d="M54 1H289C327.15999999999997 1 342 15.0 342 51V664C342 693.52 327.15999999999997 705 289 705H54C15.840000000000003 705 1 693.52 1 664V51C1 15.0 15.840000000000003 1 54 1Z" fill="#161616"/><path d="M54.0 4.5H289.0C324.64 4.5 338.5 17.520000000000003 338.5 51.0V664.0C338.5 691.0 324.64 701.5 289.0 701.5H54.0C18.36 701.5 4.5 691.0 4.5 664.0V51.0C4.5 17.520000000000003 18.36 4.5 54.0 4.5Z" fill="url(#bd)" stroke="#2a2a2a" stroke-width="1"/><g clip-path="url(#pc)"><path d="M0 0H226L0 508Z" fill="url(#gl)"/></g></svg><div style="position:absolute;left:762px;top:316px;width:318px;height:19px;background:#585858"></div><div style="position:absolute;left:762px;top:335px;width:318px;height:44px;background:#656b92"></div><div style="position:absolute;left:762px;top:379px;width:318px;height:468px;background:#fafafa"></div><div style="position:absolute;left:762px;top:378px;width:318px;height:1px;background:#5866b0"></div><div style="position:absolute;left:762px;top:847px;width:318px;height:36px;background:#000"></div><svg style="position:absolute;left:762px;top:316px" width="318" height="63" viewBox="0 0 318 63"><path d="M0 0H211L183 63H0Z" fill="rgba(255,255,255,0.06)"/></svg><div style="position:absolute;left:859px;top:273px;width:125px;height:11px;background:#0e0e0e;border-radius:6px;border:1px solid #3a3a3a"></div><div style="position:absolute;left:859px;top:917px;width:125px;height:11px;background:#0e0e0e;border-radius:6px;border:1px solid #2e2e2e"></div><div style="position:absolute;left:814px;top:274px;width:9px;height:9px;background:#3c3c46;border-radius:50%;border:1px solid #4a4a4a"></div><svg style="position:absolute;left:1018px;top:319px" width="36" height="14" viewBox="0 0 36 14"><path d="M1 2.5Q9 -3 17 2.5L9 12Z" fill="#bdbdbd"/><rect x="21" y="2" width="8" height="11" fill="#bdbdbd"/><rect x="23.5" y="0.5" width="3" height="2" fill="#bdbdbd"/></svg><div style="position:absolute;left:1051px;top:320.84px;font-size:12px;line-height:12px;color:#c8c8c8;font-weight:400;white-space:pre;">6:00</div><div style="position:absolute;left:773px;top:392.27px;font-size:11.5px;line-height:11.5px;color:#737373;font-weight:400;white-space:pre;letter-spacing:-0.2px">Hello World!</div><div style="position:absolute;left:1024px;top:790px;width:44px;height:44px;background:#ff4081;border-radius:50%;box-shadow:1px 2px 3px rgba(0,0,0,.35)"></div><svg style="position:absolute;left:1035px;top:805px" width="22" height="16" viewBox="0 0 22 16"><rect x="0.5" y="0.5" width="21" height="15" fill="#fff"/><path d="M1 1L11 9L21 1M1 15L8 7.5M21 15L14 7.5" stroke="#ff4081" stroke-width="1.3" fill="none"/></svg><svg style="position:absolute;left:806px;top:856px" width="18" height="18" viewBox="0 0 18 18"><path d="M15 2.5V15.5L3.5 9Z" fill="none" stroke="#fff" stroke-width="1.7" stroke-linejoin="round"/></svg><svg style="position:absolute;left:911px;top:856px" width="18" height="18" viewBox="0 0 18 18"><circle cx="9.3" cy="9.3" r="6.2" fill="none" stroke="#fff" stroke-width="1.7"/></svg><svg style="position:absolute;left:1016px;top:856px" width="18" height="18" viewBox="0 0 18 18"><rect x="4.5" y="4.5" width="11" height="11" fill="none" stroke="#fff" stroke-width="1.7"/></svg><svg style="position:absolute;left:8px;top:62px" width="18" height="18" viewBox="0 0 18 18"><path fill-rule="evenodd" fill="#c8913a" d="M0 1H7.5L8.5 4H18V17H0Z M3 7V14H15V7Z"/></svg><svg style="position:absolute;left:39px;top:62px" width="18" height="18" viewBox="0 0 18 18"><rect x="1" y="1.5" width="16" height="15" fill="#8c8c8c"/><rect x="4.5" y="1.5" width="8" height="6" fill="#fff"/><rect x="6.5" y="3" width="4" height="1.5" fill="#666"/><rect x="5" y="12" width="7" height="4.5" fill="#4b94cc"/></svg><svg style="position:absolute;left:70px;top:62px" width="18" height="18" viewBox="0 0 18 18"><path d="M9.5 2.5A6.5 6.5 0 0 0 6.5 15" stroke="#4a9bd0" stroke-width="3.2" fill="none"/><path d="M8.5 15.5A6.5 6.5 0 0 0 11.5 3" stroke="#3d8cc4" stroke-width="3.2" fill="none"/><path d="M17.5 0.5H9.5V8Z" fill="#3d8cc4"/><path d="M0.5 17.5H8.5V10Z" fill="#4a9bd0"/></svg><svg style="position:absolute;left:108px;top:62px" width="19" height="18" viewBox="0 0 19 18"><path d="M0.5 8.5L7.5 1V5.5C13 5.5 17 4 18.5 1C18 8 14 11 7.5 11V16.5Z" fill="#a77ac8"/></svg><svg style="position:absolute;left:138px;top:62px" width="19" height="18" viewBox="0 0 19 18"><path d="M18 8L11 1V5.5C5 5.5 1.5 9 0.5 15.5C3 12 6 10.5 11 10.5V16Z" fill="#999"/></svg><svg style="position:absolute;left:177px;top:62px" width="19" height="18" viewBox="0 0 19 18"><path d="M3 0.5L9.5 12M15.5 0.5L9 12" stroke="#555" stroke-width="1.3"/><circle cx="5" cy="14.5" r="2.8" fill="none" stroke="#a76bc8" stroke-width="2.4"/><circle cx="14" cy="14.5" r="2.8" fill="none" stroke="#a76bc8" stroke-width="2.4"/></svg><svg style="position:absolute;left:208px;top:61px" width="19" height="19" viewBox="0 0 19 19"><path d="M6 1H13L17.5 5.5V16.5H6Z" fill="#fff" stroke="#999" stroke-width="2"/><path d="M1.5 4H8.5L12.5 8V18H1.5Z" fill="#fff" stroke="#4a8ec0" stroke-width="2.2"/></svg><svg style="position:absolute;left:239px;top:61px" width="19" height="19" viewBox="0 0 19 19"><rect x="5.5" y="2" width="13" height="14" fill="#d09040"/><rect x="9" y="0.5" width="5" height="2.5" fill="#999"/><path d="M1 7H7.5L10.5 10V18H1Z" fill="#fff" stroke="#888" stroke-width="2"/></svg><svg style="position:absolute;left:277px;top:61px" width="19" height="19" viewBox="0 0 19 19"><circle cx="7.5" cy="7.5" r="5.5" fill="#eee" stroke="#8f8f8f" stroke-width="2.6"/><path d="M11.5 11.5L17.5 17.5" stroke="#8f8f8f" stroke-width="3"/></svg><svg style="position:absolute;left:307px;top:61px" width="20" height="20" viewBox="0 0 20 20"><circle cx="8.5" cy="7" r="5.5" fill="#eee" stroke="#8f8f8f" stroke-width="2.6"/><path d="M12.5 11L18 16.5" stroke="#8f8f8f" stroke-width="3"/><path d="M1 19L4.5 10.5L8 19M2.5 16H6.5" stroke="#999" stroke-width="1.3" fill="none"/></svg><svg style="position:absolute;left:346px;top:63px" width="18" height="17" viewBox="0 0 18 17"><path d="M0.5 8.5L8.5 0.5V5H17V12H8.5V16.5Z" fill="#4f9fd5"/><path d="M4 8.5L8 5V7H15V10H8V12Z" fill="#eaf4fb"/></svg><svg style="position:absolute;left:377px;top:63px" width="18" height="17" viewBox="0 0 18 17"><path d="M17.5 8.5L9.5 0.5V5H1V12H9.5V16.5Z" fill="#999"/><path d="M14 8.5L10 5V7H3V10H10V12Z" fill="#eee"/></svg><svg style="position:absolute;left:415px;top:62px" width="19" height="18" viewBox="0 0 19 18"><path d="M4 1V10H1L5.5 16L10 10H7V1Z" fill="#2aa84a"/><text x="10" y="5.5" font-size="6.5" font-family="Liberation Mono" font-weight="700" fill="#666">01</text><text x="10" y="11.5" font-size="6.5" font-family="Liberation Mono" font-weight="700" fill="#666">10</text><text x="10" y="17.5" font-size="6.5" font-family="Liberation Mono" font-weight="700" fill="#666">01</text></svg><div style="position:absolute;left:442px;top:60px;width:77px;height:23px;background:linear-gradient(#f4f4f4,#dcdcdc);border:1px solid #a0a0a0;border-radius:3px"></div><svg style="position:absolute;left:449px;top:62px" width="17" height="19" viewBox="0 0 17 19"><path d="M3 6.8A5.5 5.5 0 0 1 14 6.8Z" fill="#8bc33a"/><path d="M4.8 1.2L6.3 3.4M12.2 1.2L10.7 3.4" stroke="#8bc33a" stroke-width="1"/><path d="M3 8H14V14.5Q14 15.5 13 15.5H4Q3 15.5 3 14.5Z" fill="#8bc33a"/><rect x="0" y="8" width="2.2" height="6.2" rx="1.1" fill="#8bc33a"/><rect x="14.8" y="8" width="2.2" height="6.2" rx="1.1" fill="#8bc33a"/><rect x="5" y="14" width="2.4" height="4.5" rx="1.2" fill="#8bc33a"/><rect x="9.6" y="14" width="2.4" height="4.5" rx="1.2" fill="#8bc33a"/><circle cx="6.3" cy="4.9" r="0.8" fill="#fff"/><circle cx="10.7" cy="4.9" r="0.8" fill="#fff"/></svg><div style="position:absolute;left:470px;top:66.30px;font-size:15px;line-height:15px;color:#000;font-weight:400;white-space:pre;">app</div><svg style="position:absolute;left:502px;top:69px" width="10" height="6" viewBox="0 0 10 6"><path d="M0 0H9L4.5 5Z" fill="#999"/></svg><svg style="position:absolute;left:529px;top:62px" width="16" height="18" viewBox="0 0 16 18"><path d="M1 1.5L15 9L1 16.5Z" fill="#2ba84a"/></svg><svg style="position:absolute;left:559px;top:62px" width="17" height="18" viewBox="0 0 17 18"><path d="M4 1.5L6 4M13 1.5L11 4" stroke="#2aa198" stroke-width="1.6"/><ellipse cx="8.5" cy="10.5" rx="6" ry="7" fill="#2aa198"/><path d="M0 7H17M0 11H17M0 15H17" stroke="#2aa198" stroke-width="1.8"/><rect x="5.5" y="8" width="6" height="1.8" fill="#e8e8e8"/><rect x="5.5" y="12" width="6" height="1.8" fill="#e8e8e8"/></svg><svg style="position:absolute;left:589px;top:62px" width="18" height="18" viewBox="0 0 18 18"><path d="M0 4L5 9L0 14Z" fill="#999"/><g stroke="#999" stroke-width="1.2" fill="none"><path d="M9 1L17 9L9 17L1 9Z"/><path d="M5 5L13 13M13 5L5 13M7 3L15 11M11 3L3 11M3 7L11 15M15 7L7 15"/></g><path d="M0 4L5 9L0 14Z" fill="#999"/></svg><svg style="position:absolute;left:622px;top:61px" width="18" height="19" viewBox="0 0 18 19"><rect x="1" y="1" width="8" height="16" rx="1.5" fill="#bbb" stroke="#444" stroke-width="1.4"/><ellipse cx="12" cy="15" rx="3.2" ry="3.5" fill="#2ba84a"/><path d="M8 13H16M8 16.5H16" stroke="#333" stroke-width="0.9"/></svg><svg style="position:absolute;left:651px;top:62px" width="18" height="18" viewBox="0 0 18 18"><path d="M10 3.5A6 6 0 0 0 5.5 15.5" stroke="#999" stroke-width="2.4" fill="none"/><path d="M9 0L15 3.8L9 7.5Z" fill="#999"/><rect x="8.5" y="9" width="9" height="9" fill="#999"/></svg><svg style="position:absolute;left:683px;top:63.5px" width="15" height="15" viewBox="0 0 15 15"><rect x="0" y="0" width="15" height="15" fill="#999"/></svg><svg style="position:absolute;left:720px;top:62px" width="19" height="19" viewBox="0 0 19 19"><path d="M3.5 0.5L7 2.5V6.5L3.5 8.5L0 6.5V2.5Z" fill="#f0a040"/><circle cx="3.5" cy="4.5" r="1.4" fill="#fff"/><path d="M15 2A4 4 0 0 0 10.5 7.5L3 15L5 17L12.5 9.5A4 4 0 0 0 18 5L16 7L13.5 6L13 3.5Z" fill="#7a7a7a"/></svg><svg style="position:absolute;left:751px;top:62px" width="19" height="18" viewBox="0 0 19 18"><rect x="0.5" y="2.5" width="12" height="14" fill="none" stroke="#888" stroke-width="1.5"/><rect x="3" y="0.5" width="12" height="3" fill="#888"/><g fill="#3d8bd0"><rect x="7" y="7" width="3" height="2.5"/><rect x="11" y="7" width="3" height="2.5"/><rect x="15" y="7" width="3" height="2.5"/><rect x="7" y="10.5" width="3" height="2.5"/><rect x="11" y="10.5" width="3" height="2.5"/><rect x="15" y="10.5" width="3" height="2.5"/><rect x="7" y="14" width="3" height="2.5"/><rect x="11" y="14" width="3" height="2.5"/><rect x="15" y="14" width="3" height="2.5"/></g><g fill="#888"><rect x="3" y="7" width="3" height="1.3"/><rect x="3" y="10.5" width="3" height="1.3"/></g></svg><svg style="position:absolute;left:790px;top:61px" width="17" height="20" viewBox="0 0 17 20"><path d="M12.5 3.5A5 5 0 1 0 13 8" stroke="#5ec042" stroke-width="2" fill="none"/><circle cx="8" cy="6" r="2.3" fill="#2aa05a"/><path d="M6 9V14H2.5L8.5 19.5L14.5 14H11V9Z" fill="#3d8bd0"/></svg><svg style="position:absolute;left:819px;top:62px" width="21" height="19" viewBox="0 0 21 19"><rect x="1" y="0.5" width="10" height="17" rx="1" fill="#fff" stroke="#999" stroke-width="1.5"/><rect x="2.5" y="2" width="7" height="11" fill="#a06bc8"/><path d="M9 19A6 6 0 0 1 21 19Z" fill="#8bc33a"/><path d="M10 12.5L11.5 14.5M20 12.5L18.5 14.5" stroke="#8bc33a" stroke-width="1"/><rect x="8" y="15" width="13" height="4" fill="#8bc33a"/></svg><svg style="position:absolute;left:854px;top:61px" width="16" height="20" viewBox="0 0 16 20"><path d="M2 5A6 6 0 0 1 14 5Z" fill="#8bc33a"/><path d="M3 0.5L4.5 3M13 0.5L11.5 3" stroke="#8bc33a" stroke-width="1"/><rect x="1" y="7" width="14" height="12" fill="#3d8bd0"/><path d="M8 9V15M5 12.5L8 16L11 12.5" stroke="#fff" stroke-width="1.6" fill="none"/><path d="M4 17.5H12" stroke="#fff" stroke-width="1"/></svg><svg style="position:absolute;left:882px;top:62px" width="17" height="19" viewBox="0 0 17 19"><path d="M3 6.8A5.5 5.5 0 0 1 14 6.8Z" fill="#7cb82f"/><path d="M4.8 1.2L6.3 3.4M12.2 1.2L10.7 3.4" stroke="#7cb82f" stroke-width="1"/><path d="M3 8H14V14.5Q14 15.5 13 15.5H4Q3 15.5 3 14.5Z" fill="#7cb82f"/><rect x="0" y="8" width="2.2" height="6.2" rx="1.1" fill="#7cb82f"/><rect x="14.8" y="8" width="2.2" height="6.2" rx="1.1" fill="#7cb82f"/><rect x="5" y="14" width="2.4" height="4.5" rx="1.2" fill="#7cb82f"/><rect x="9.6" y="14" width="2.4" height="4.5" rx="1.2" fill="#7cb82f"/><circle cx="6.3" cy="4.9" r="0.8" fill="#fff"/><circle cx="10.7" cy="4.9" r="0.8" fill="#fff"/></svg><svg style="position:absolute;left:924px;top:61px" width="12" height="20" viewBox="0 0 12 20"><path d="M1.5 5.5A4.5 4.5 0 1 1 7.5 9.5C6 10.5 6 11 6 13" stroke="#3d8bd0" stroke-width="2.6" fill="none"/><circle cx="6" cy="17" r="1.7" fill="#3d8bd0"/></svg><svg style="position:absolute;left:1863px;top:61px" width="21" height="21" viewBox="0 0 21 21"><circle cx="8" cy="8" r="6" fill="none" stroke="#666" stroke-width="2.2"/><path d="M12.5 12.5L19 19" stroke="#666" stroke-width="3"/></svg><svg style="position:absolute;left:1893px;top:59px" width="20" height="20" viewBox="0 0 20 20"><rect width="20" height="20" fill="#ccc"/><circle cx="10" cy="7.5" r="3.5" fill="#fff"/><path d="M3 20V15C3 12 6 11.5 10 11.5S17 12 17 15V20Z" fill="#fff"/></svg><svg style="position:absolute;left:11px;top:95px" width="20" height="18" viewBox="0 0 20 18"><path fill-rule="evenodd" fill="#c49a63" d="M0 0H8.5L9.5 3H18V15H0Z M2.5 5.5V12.5H15.5V5.5Z"/><rect x="11" y="9" width="7" height="7" fill="#6aaad5"/></svg><div style="position:absolute;left:33px;top:97.30px;font-size:15px;line-height:15px;color:#000;font-weight:700;white-space:pre;">OkHttpGo</div><svg style="position:absolute;left:107px;top:90px" width="12" height="27" viewBox="0 0 12 27"><path d="M0.5 0L10.5 13.5L0.5 27" stroke="#a8a8a8" stroke-width="1" fill="none"/></svg><svg style="position:absolute;left:120px;top:95px" width="20" height="18" viewBox="0 0 20 18"><path fill-rule="evenodd" fill="#c49a63" d="M0 0H8.5L9.5 3H18V15H0Z M2.5 5.5V12.5H15.5V5.5Z"/><rect x="11" y="9" width="7" height="7" fill="#6aaad5"/></svg><div style="position:absolute;left:142px;top:97.30px;font-size:15px;line-height:15px;color:#000;font-weight:700;white-space:pre;">app</div><svg style="position:absolute;left:170px;top:90px" width="12" height="27" viewBox="0 0 12 27"><path d="M0.5 0L10.5 13.5L0.5 27" stroke="#a8a8a8" stroke-width="1" fill="none"/></svg><svg style="position:absolute;left:184px;top:95px" width="20" height="18" viewBox="0 0 20 18"><path fill-rule="evenodd" fill="#c49a63" d="M0 0H8.5L9.5 3H18V15H0Z M2.5 5.5V12.5H15.5V5.5Z"/></svg><div style="position:absolute;left:206px;top:97.30px;font-size:15px;line-height:15px;color:#000;font-weight:400;white-space:pre;">src</div><svg style="position:absolute;left:228px;top:90px" width="12" height="27" viewBox="0 0 12 27"><path d="M0.5 0L10.5 13.5L0.5 27" stroke="#a8a8a8" stroke-width="1" fill="none"/></svg><svg style="position:absolute;left:240px;top:95px" width="20" height="18" viewBox="0 0 20 18"><path fill-rule="evenodd" fill="#c49a63" d="M0 0H8.5L9.5 3H18V15H0Z M2.5 5.5V12.5H15.5V5.5Z"/></svg><div style="position:absolute;left:262px;top:97.30px;font-size:15px;line-height:15px;color:#000;font-weight:400;white-space:pre;">main</div><svg style="position:absolute;left:297px;top:90px" width="12" height="27" viewBox="0 0 12 27"><path d="M0.5 0L10.5 13.5L0.5 27" stroke="#a8a8a8" stroke-width="1" fill="none"/></svg><svg style="position:absolute;left:311px;top:95px" width="20" height="18" viewBox="0 0 20 18"><path fill-rule="evenodd" fill="#c49a63" d="M0 0H8.5L9.5 3H18V15H0Z M2.5 5.5V12.5H15.5V5.5Z"/><rect x="10" y="8" width="8" height="8" fill="#f0b830"/><path d="M10 10.5h8M10 13h8M13.5 8v8" stroke="#c08010" stroke-width="0.8"/></svg><div style="position:absolute;left:333px;top:97.30px;font-size:15px;line-height:15px;color:#000;font-weight:400;white-space:pre;">res</div><svg style="position:absolute;left:353px;top:90px" width="12" height="27" viewBox="0 0 12 27"><path d="M0.5 0L10.5 13.5L0.5 27" stroke="#a8a8a8" stroke-width="1" fill="none"/></svg><svg style="position:absolute;left:40px;top:122px" width="22" height="19" viewBox="0 0 22 19"><rect x="7.5" y="1.5" width="12" height="9.5" fill="#9cc8ea" stroke="#4a9ad4" stroke-width="2"/><path d="M1.5 5.5H7L9.5 8V17.5H1.5Z" fill="#8a9bb6" stroke="#666" stroke-width="2"/><path d="M4 11H7M4 13.5H7" stroke="#666" stroke-width="1.2"/></svg><svg style="position:absolute;left:124px;top:122px" width="22" height="19" viewBox="0 0 22 19"><path d="M6 1.5H10L11 3H17V11H6Z" fill="none" stroke="#aaa" stroke-width="2" opacity=".8"/><path d="M1.5 5.5H6L7 7.5H13V16.5H1.5Z" fill="#c4ccd8" stroke="#d2ae7a" stroke-width="2"/><circle cx="6.5" cy="11.5" r="1.6" fill="#7ab0dc"/></svg><svg style="position:absolute;left:222px;top:122px" width="22" height="19" viewBox="0 0 22 19"><rect x="7.5" y="1.5" width="12" height="9.5" fill="#b8d4ea" stroke="#7ab4e0" stroke-width="2"/><path d="M1.5 5.5H7L9.5 8V17.5H1.5Z" fill="#bcc6d6" stroke="#999" stroke-width="2"/><path d="M4 11H7M4 13.5H7" stroke="#999" stroke-width="1.2"/></svg><svg style="position:absolute;left:320px;top:126px" width="7" height="11" viewBox="0 0 7 11"><path d="M0.5 0L6.5 5.5L0.5 11Z" fill="#505050"/></svg><svg style="position:absolute;left:377px;top:122px" width="18" height="18" viewBox="0 0 18 18"><circle cx="9" cy="9" r="6.8" fill="none" stroke="#666" stroke-width="1.7"/><path d="M9 2V5M9 13V16M2 9H5M13 9H16" stroke="#666" stroke-width="1.5"/></svg><svg style="position:absolute;left:403px;top:122px" width="16" height="18" viewBox="0 0 16 18"><path d="M1 7.2H15M1 11.8H15M1 6V8.5M15 6V8.5M1 10.5V13M15 10.5V13" stroke="#777" stroke-width="1.3"/><path d="M8 0.5V4" stroke="#777" stroke-width="1.3"/><path d="M5.5 3.5H10.5L8 6Z" fill="#777"/><path d="M8 17.5V14" stroke="#777" stroke-width="1.3"/><path d="M5.5 14.5H10.5L8 12Z" fill="#777"/></svg><div style="position:absolute;left:427px;top:123px;width:1px;height:18px;background:#aab4c4"></div><svg style="position:absolute;left:436px;top:123px" width="24" height="16" viewBox="0 0 24 16"><g fill="#666"><rect x="6.3" y="0.5" width="3.4" height="15"/><rect x="0.5" y="6.3" width="15" height="3.4"/><rect x="6.3" y="0.5" width="3.4" height="15" transform="rotate(45 8 8)"/><rect x="6.3" y="0.5" width="3.4" height="15" transform="rotate(-45 8 8)"/></g><circle cx="8" cy="8" r="5" fill="#666"/><circle cx="8" cy="8" r="2" fill="#c9d3e2"/><path d="M18 7H23L20.5 10Z" fill="#666"/></svg><svg style="position:absolute;left:468px;top:123px" width="18" height="16" viewBox="0 0 18 16"><rect x="1.5" y="1" width="3" height="14" fill="#c9d3e2" stroke="#6a6a6a" stroke-width="1.2"/><rect x="1.5" y="1" width="3" height="7" fill="#6a6a6a"/><path d="M7 5H17M7 5L9.8 2.5M7 5L9.8 7.5" stroke="#6a6a6a" stroke-width="1.2" fill="none"/></svg><div style="position:absolute;left:14.5px;top:185px;transform-origin:0 0;transform:rotate(-90deg);font-size:13.5px;line-height:13.5px;white-space:pre;color:#000"><div style="position:relative;top:-7.425000000000001px"><u>1</u>: Project</div></div><svg style="position:absolute;left:5px;top:188px" width="17" height="17" viewBox="0 0 17 17"><circle cx="8.5" cy="8.5" r="8" fill="#7ab53e"/><path d="M8.5 4L4 15M8.5 4L13 15M5.5 12H11.5" stroke="#fff" stroke-width="1.4" fill="none"/><circle cx="8.5" cy="4.5" r="1.8" fill="#555"/></svg><div style="position:absolute;left:14.5px;top:301px;transform-origin:0 0;transform:rotate(-90deg);font-size:13.5px;line-height:13.5px;white-space:pre;color:#000"><div style="position:relative;top:-7.425000000000001px"><u>7</u>: Structure</div></div><svg style="position:absolute;left:5px;top:304px" width="17" height="17" viewBox="0 0 17 17"><path d="M4 5L8.5 13L13 5Z" fill="none" stroke="#8c8ca0" stroke-width="1.3"/><circle cx="3.5" cy="4.5" r="3" fill="#4a9ad0"/><circle cx="13.5" cy="4.5" r="3" fill="#e06060"/><circle cx="8.5" cy="13.5" r="3" fill="#d0904a"/></svg><div style="position:absolute;left:14.5px;top:404px;transform-origin:0 0;transform:rotate(-90deg);font-size:13.5px;line-height:13.5px;white-space:pre;color:#000"><div style="position:relative;top:-7.425000000000001px">Captures</div></div><svg style="position:absolute;left:5px;top:405px" width="17" height="18" viewBox="0 0 17 18"><circle cx="8.5" cy="10" r="6.5" fill="#b8dcf4" stroke="#4a90c8" stroke-width="1.5"/><path d="M8.5 10L11 7" stroke="#333" stroke-width="1.2"/><rect x="6.5" y="0.5" width="4" height="2" fill="#4a90c8"/></svg><div style="position:absolute;left:14.5px;top:860px;transform-origin:0 0;transform:rotate(-90deg);font-size:13.5px;line-height:13.5px;white-space:pre;color:#000"><div style="position:relative;top:-7.425000000000001px"><u>2</u>: Favorites</div></div><svg style="position:absolute;left:5px;top:863px" width="17" height="17" viewBox="0 0 17 17"><path d="M8.5 0.5L10.8 6H16.5L11.8 9.5L13.5 15.5L8.5 12L3.5 15.5L5.2 9.5L0.5 6H6.2Z" fill="#f0a030"/></svg><div style="position:absolute;left:14.5px;top:990px;transform-origin:0 0;transform:rotate(-90deg);font-size:13.5px;line-height:13.5px;white-space:pre;color:#000"><div style="position:relative;top:-7.425000000000001px">Build Variants</div></div><svg style="position:absolute;left:5px;top:994px" width="17" height="19" viewBox="0 0 17 19"><path d="M3 6.8A5.5 5.5 0 0 1 14 6.8Z" fill="#8bc33a"/><path d="M4.8 1.2L6.3 3.4M12.2 1.2L10.7 3.4" stroke="#8bc33a" stroke-width="1"/><path d="M3 8H14V14.5Q14 15.5 13 15.5H4Q3 15.5 3 14.5Z" fill="#8bc33a"/><rect x="0" y="8" width="2.2" height="6.2" rx="1.1" fill="#8bc33a"/><rect x="14.8" y="8" width="2.2" height="6.2" rx="1.1" fill="#8bc33a"/><rect x="5" y="14" width="2.4" height="4.5" rx="1.2" fill="#8bc33a"/><rect x="9.6" y="14" width="2.4" height="4.5" rx="1.2" fill="#8bc33a"/><circle cx="6.3" cy="4.9" r="0.8" fill="#fff"/><circle cx="10.7" cy="4.9" r="0.8" fill="#fff"/></svg><svg style="position:absolute;left:1897px;top:128px" width="18" height="18" viewBox="0 0 18 18"><path d="M16.2 10.3A7.3 7.3 0 1 1 4.8 3.0" stroke="#8fc050" stroke-width="2.6" fill="none"/><path d="M8.4 1.7A7.3 7.3 0 0 1 15.6 5.9" stroke="#18a050" stroke-width="2.6" fill="none"/><circle cx="9" cy="9" r="2.8" fill="#18a050"/></svg><div style="position:absolute;left:1907px;top:151px;transform-origin:0 0;transform:rotate(90deg);font-size:13.5px;line-height:13.5px;white-space:pre;color:#000"><div style="position:relative;top:-6.075px">Gradle</div></div><svg style="position:absolute;left:1898px;top:899px" width="16" height="18" viewBox="0 0 17 19"><path d="M3 6.8A5.5 5.5 0 0 1 14 6.8Z" fill="#8bc33a"/><path d="M4.8 1.2L6.3 3.4M12.2 1.2L10.7 3.4" stroke="#8bc33a" stroke-width="1"/><path d="M3 8H14V14.5Q14 15.5 13 15.5H4Q3 15.5 3 14.5Z" fill="#8bc33a"/><rect x="0" y="8" width="2.2" height="6.2" rx="1.1" fill="#8bc33a"/><rect x="14.8" y="8" width="2.2" height="6.2" rx="1.1" fill="#8bc33a"/><rect x="5" y="14" width="2.4" height="4.5" rx="1.2" fill="#8bc33a"/><rect x="9.6" y="14" width="2.4" height="4.5" rx="1.2" fill="#8bc33a"/><circle cx="6.3" cy="4.9" r="0.8" fill="#fff"/><circle cx="10.7" cy="4.9" r="0.8" fill="#fff"/></svg><div style="position:absolute;left:1907px;top:919px;transform-origin:0 0;transform:rotate(90deg);font-size:13.5px;line-height:13.5px;white-space:pre;color:#000"><div style="position:relative;top:-6.075px"><span style="letter-spacing:0.5px">Android Model</span></div></div><svg style="position:absolute;left:503px;top:123px" width="17" height="17" viewBox="0 0 17 17"><circle cx="8.5" cy="8.5" r="7.8" fill="#a8d2f0" stroke="#5aa0d8" stroke-width="1.2"/><path d="M11 5.8A3.5 3.5 0 1 0 11 11.2" stroke="#333" stroke-width="1.2" fill="none"/></svg><svg style="position:absolute;left:643px;top:128px" width="10" height="10" viewBox="0 0 10 10"><path d="M1.5 1.5L8.5 8.5M8.5 1.5L1.5 8.5" stroke="#555" stroke-width="1.8"/></svg><svg style="position:absolute;left:672px;top:122px" width="18" height="19" viewBox="0 0 18 19"><path d="M4 0.6H11L14.4 4V17.4H4Z" fill="#fff" stroke="#999" stroke-width="1.2"/><rect x="1" y="6" width="15" height="7" fill="#f0a030"/><path d="M6 7.2L3.8 9.5L6 11.8M11 7.2L13.2 9.5L11 11.8" stroke="#fff" stroke-width="1.1" fill="none"/></svg><svg style="position:absolute;left:817px;top:128px" width="10" height="10" viewBox="0 0 10 10"><path d="M1.5 1.5L8.5 8.5M8.5 1.5L1.5 8.5" stroke="#333" stroke-width="1.8"/></svg><svg style="position:absolute;left:615px;top:156px" width="26" height="16" viewBox="0 0 26 16"><g fill="#666"><rect x="6.3" y="0.5" width="3.4" height="15"/><rect x="0.5" y="6.3" width="15" height="3.4"/><rect x="6.3" y="0.5" width="3.4" height="15" transform="rotate(45 8 8)"/><rect x="6.3" y="0.5" width="3.4" height="15" transform="rotate(-45 8 8)"/></g><circle cx="8" cy="8" r="5" fill="#666"/><circle cx="8" cy="8" r="2" fill="#e8e8e8"/><path d="M18 7H23L20.5 10Z" fill="#666"/></svg><svg style="position:absolute;left:647px;top:156px" width="20" height="16" viewBox="0 0 20 16"><rect x="1.5" y="0.8" width="3" height="14" fill="#e8e8e8" stroke="#6a6a6a" stroke-width="1.2"/><rect x="1.5" y="0.8" width="3" height="8" fill="#6a6a6a"/><path d="M7 5H17M7 5L9.8 2.5M7 5L9.8 7.5" stroke="#6a6a6a" stroke-width="1.2" fill="none"/></svg><div style="position:absolute;left:715px;top:154px;width:1px;height:28px;background:#cccccc"></div><div style="position:absolute;left:820px;top:154px;width:1px;height:28px;background:#cccccc"></div><div style="position:absolute;left:864px;top:154px;width:1px;height:28px;background:#cccccc"></div><div style="position:absolute;left:976px;top:154px;width:1px;height:28px;background:#cccccc"></div><div style="position:absolute;left:1100px;top:154px;width:1px;height:28px;background:#cccccc"></div><div style="position:absolute;left:1144px;top:154px;width:1px;height:28px;background:#cccccc"></div><svg style="position:absolute;left:678px;top:155px" width="22" height="22" viewBox="0 0 22 22"><path d="M1 1H8.5L11.5 4V16H1Z" fill="none" stroke="#999" stroke-width="1.8"/><path d="M6 21A6.5 5.5 0 0 1 19 21Z" fill="#8bc33a"/><path d="M7.5 14L9 16.5M17.5 14L16 16.5" stroke="#8bc33a" stroke-width="1"/><circle cx="10" cy="19" r="0.8" fill="#fff"/><circle cx="15" cy="19" r="0.8" fill="#fff"/></svg><svg style="position:absolute;left:700px;top:166px" width="8" height="5" viewBox="0 0 8 5"><path d="M0 0H7L3.5 4.5Z" fill="#2f4a70"/></svg><svg style="position:absolute;left:721px;top:156px" width="16" height="20" viewBox="0 0 16 20"><rect x="0.5" y="0.5" width="9" height="18" rx="1" fill="#ddd" stroke="#888"/><rect x="2" y="3" width="6" height="12" fill="#8bc33a"/><rect x="6.5" y="5.5" width="9" height="14" rx="1" fill="#ddd" stroke="#888"/><rect x="8.5" y="8" width="5" height="7" fill="#8bc33a"/></svg><div style="position:absolute;left:742px;top:162.00px;font-size:13px;line-height:13px;color:#000;font-weight:400;white-space:pre;letter-spacing:0.1px">Nexus 6P</div><svg style="position:absolute;left:801px;top:166px" width="8" height="5" viewBox="0 0 8 5"><path d="M0 0H7L3.5 4.5Z" fill="#2f4a70"/></svg><svg style="position:absolute;left:826px;top:155px" width="22" height="22" viewBox="0 0 22 22"><rect x="1.5" y="9.5" width="18" height="11" rx="1" fill="#f4f4f4" stroke="#999" stroke-width="1.6"/><path d="M2 6A10 7 0 0 1 18 5" stroke="#5a9ad0" stroke-width="1.6" fill="none"/><path d="M0 3L2.5 8L5 4Z" fill="#5a9ad0"/></svg><svg style="position:absolute;left:848px;top:166px" width="8" height="5" viewBox="0 0 8 5"><path d="M0 0H7L3.5 4.5Z" fill="#2f4a70"/></svg><svg style="position:absolute;left:871px;top:157px" width="18" height="18" viewBox="0 0 18 18"><circle cx="9" cy="9" r="7.5" fill="#d0d0d0" stroke="#7ab030" stroke-width="2.2"/><path d="M9 3.5A5.5 5.5 0 0 1 9 14.5Z" fill="#444"/></svg><div style="position:absolute;left:891px;top:161.49px;font-size:13.6px;line-height:13.6px;color:#000;font-weight:400;white-space:pre;">NoActionBar</div><svg style="position:absolute;left:983px;top:155px" width="18" height="20" viewBox="0 0 18 20"><rect x="0" y="6" width="18" height="14" fill="#fafafa"/><rect x="0" y="0" width="18" height="3" fill="#7ab030"/><path d="M1 5H5M7 5H11M13 5H17" stroke="#aaa" stroke-width="1"/></svg><div style="position:absolute;left:1003px;top:161.49px;font-size:13.6px;line-height:13.6px;color:#000;font-weight:400;white-space:pre;letter-spacing:0.3px">MainActivity</div><svg style="position:absolute;left:1081px;top:166px" width="8" height="5" viewBox="0 0 8 5"><path d="M0 0H7L3.5 4.5Z" fill="#2f4a70"/></svg><svg style="position:absolute;left:1107px;top:158px" width="18" height="18" viewBox="0 0 18 18"><circle cx="9" cy="9" r="8.5" fill="#6a9fd4"/><path d="M3 5C6 5 7 7 6 9S8 12 7 15M11 2C10 5 13 7 16 6M12 11C13 13 15 13 16 12" stroke="#c8dcf0" stroke-width="2" fill="none"/></svg><svg style="position:absolute;left:1128px;top:166px" width="8" height="5" viewBox="0 0 8 5"><path d="M0 0H7L3.5 4.5Z" fill="#2f4a70"/></svg><svg style="position:absolute;left:1151px;top:155px" width="18" height="22" viewBox="0 0 17 19"><path d="M3 6.8A5.5 5.5 0 0 1 14 6.8Z" fill="#7cb82f"/><path d="M4.8 1.2L6.3 3.4M12.2 1.2L10.7 3.4" stroke="#7cb82f" stroke-width="1"/><path d="M3 8H14V14.5Q14 15.5 13 15.5H4Q3 15.5 3 14.5Z" fill="#7cb82f"/><rect x="0" y="8" width="2.2" height="6.2" rx="1.1" fill="#7cb82f"/><rect x="14.8" y="8" width="2.2" height="6.2" rx="1.1" fill="#7cb82f"/><rect x="5" y="14" width="2.4" height="4.5" rx="1.2" fill="#7cb82f"/><rect x="9.6" y="14" width="2.4" height="4.5" rx="1.2" fill="#7cb82f"/><circle cx="6.3" cy="4.9" r="0.8" fill="#fff"/><circle cx="10.7" cy="4.9" r="0.8" fill="#fff"/></svg><div style="position:absolute;left:1170px;top:161.74px;font-size:13.3px;line-height:13.3px;color:#000;font-weight:400;white-space:pre;">23</div><svg style="position:absolute;left:1188px;top:166px" width="8" height="5" viewBox="0 0 8 5"><path d="M0 0H7L3.5 4.5Z" fill="#2f4a70"/></svg><svg style="position:absolute;left:675px;top:188px" width="19" height="19" viewBox="0 0 19 19"><rect x="0.5" y="0.5" width="18" height="18" fill="linear-gradient(#fff,#ddd)" stroke="#444" stroke-width="1"/><rect x="1" y="1" width="17" height="17" fill="#f0f0f0"/><rect x="0.75" y="0.75" width="17.5" height="17.5" fill="none" stroke="#444" stroke-width="1.5"/><path d="M4 4L8 8M4 4V7M4 4H7M15 4L11 8M15 4V7M15 4H12M4 15L8 11M4 15V12M4 15H7M15 15L11 11M15 15V12M15 15H12" stroke="#222" stroke-width="1.4" fill="none"/></svg><svg style="position:absolute;left:696px;top:198px" width="8" height="5" viewBox="0 0 8 5"><path d="M0 0H7L3.5 4.5Z" fill="#2f4a70"/></svg><svg style="position:absolute;left:712px;top:189px" width="19" height="19" viewBox="0 0 19 19"><rect x="0.75" y="0.75" width="17.5" height="17.5" fill="#f0f0f0" stroke="#444" stroke-width="1.5"/><path d="M4 9.5H15M4 9.5L7 6.5M4 9.5L7 12.5M15 9.5L12 6.5M15 9.5L12 12.5" stroke="#222" stroke-width="1.6" fill="none"/></svg><svg style="position:absolute;left:740px;top:189px" width="19" height="19" viewBox="0 0 19 19"><rect x="0.75" y="0.75" width="17.5" height="17.5" fill="#f0f0f0" stroke="#444" stroke-width="1.5"/><path d="M9.5 4V15M9.5 4L6.5 7M9.5 4L12.5 7M9.5 15L6.5 12M9.5 15L12.5 12" stroke="#222" stroke-width="1.6" fill="none"/></svg><div style="position:absolute;left:1329px;top:189px;width:29px;height:29px;background:#a8a8a8;border:1px solid #888;border-radius:2px"></div><svg style="position:absolute;left:1334px;top:193px" width="18" height="18" viewBox="0 0 18 18"><circle cx="7.5" cy="7.5" r="5" fill="none" stroke="#8aa8c8" stroke-width="1.6"/><path d="M11 11L16 16" stroke="#8aa8c8" stroke-width="2"/><path d="M5 6L7 4M8 11L10 9" stroke="#8aa8c8"/></svg><svg style="position:absolute;left:1364px;top:193px" width="18" height="18" viewBox="0 0 18 18"><circle cx="7.5" cy="7.5" r="6" fill="#fff" stroke="#999" stroke-width="1.4"/><path d="M12 12L17 17" stroke="#999" stroke-width="2.2"/><text x="3.2" y="10.5" font-size="7" font-weight="700" font-family="Liberation Sans" fill="#5a8ac0">1:1</text></svg><div style="position:absolute;left:1393px;top:190px;width:1px;height:26px;background:#c8c8c8"></div><svg style="position:absolute;left:1402px;top:193px" width="18" height="18" viewBox="0 0 18 18"><circle cx="7.5" cy="7.5" r="6" fill="#fff" stroke="#999" stroke-width="1.4"/><path d="M12 12L17 17" stroke="#999" stroke-width="2.2"/><path d="M4.5 7.5H10.5M7.5 4.5V10.5" stroke="#4a8ac8" stroke-width="2.2"/></svg><svg style="position:absolute;left:1433px;top:193px" width="18" height="18" viewBox="0 0 18 18"><circle cx="7.5" cy="7.5" r="6" fill="#fff" stroke="#999" stroke-width="1.4"/><path d="M12 12L17 17" stroke="#999" stroke-width="2.2"/><path d="M4.5 7.5H10.5" stroke="#4a8ac8" stroke-width="2.2"/></svg><svg style="position:absolute;left:1466px;top:194px" width="14" height="18" viewBox="0 0 14 18"><path d="M1 1H9L13 5V17H1Z" fill="#fff" stroke="#999" stroke-width="1.3"/><path d="M3.5 8H10.5M3.5 11H10.5M3.5 14H10.5" stroke="#888"/></svg><svg style="position:absolute;left:1496px;top:193px" width="19" height="19" viewBox="0 0 18 18"><path d="M9.5 2.5A6.5 6.5 0 0 0 6.5 15" stroke="#4a9bd0" stroke-width="3.2" fill="none"/><path d="M8.5 15.5A6.5 6.5 0 0 0 11.5 3" stroke="#3d8cc4" stroke-width="3.2" fill="none"/><path d="M17.5 0.5H9.5V8Z" fill="#3d8cc4"/><path d="M0.5 17.5H8.5V10Z" fill="#4a9bd0"/></svg><svg style="position:absolute;left:1549px;top:195px" width="20" height="19" viewBox="0 0 20 19"><g fill="#3d8fd0"><rect x="6.3" y="0.5" width="3.4" height="15"/><rect x="0.5" y="6.3" width="15" height="3.4"/><rect x="6.3" y="0.5" width="3.4" height="15" transform="rotate(45 8 8)"/><rect x="6.3" y="0.5" width="3.4" height="15" transform="rotate(-45 8 8)"/></g><circle cx="8" cy="8" r="5" fill="#3d8fd0"/><circle cx="8" cy="8" r="2" fill="#e6e6e6"/><path d="M14 14H19L16.5 17Z" fill="#333"/></svg><svg style="position:absolute;left:1578px;top:188px" width="10" height="11" viewBox="0 0 10 11"><path d="M0 0L10 5.5L0 11Z" fill="#a8a8a8"/></svg><svg style="position:absolute;left:1604px;top:183px" width="12" height="20" viewBox="0 0 12 20"><rect x="0" y="0" width="12" height="20" rx="0.8" fill="#8c8c8c"/><rect x="1.5" y="3.2" width="9" height="12" fill="#eef3f8"/><rect x="2.2" y="4" width="7.6" height="10.5" fill="#6aa6d0"/><rect x="5" y="16.8" width="2" height="1.5" fill="#111"/></svg><svg style="position:absolute;left:1780px;top:155px" width="18" height="20" viewBox="0 0 18 20"><path d="M1 1H17M1 19H17" stroke="#666" stroke-width="1.5"/><path d="M9 4L4 9H14Z M9 16L4 11H14Z" fill="#4a90c8"/></svg><svg style="position:absolute;left:1806px;top:155px" width="18" height="20" viewBox="0 0 18 20"><path d="M1 8H17M1 12H17" stroke="#666" stroke-width="1.3"/><path d="M9 6L4.5 0.5H13.5Z M9 14L4.5 19.5H13.5Z" fill="#4a90c8"/></svg><div style="position:absolute;left:1831px;top:157px;width:1px;height:16px;background:#c8c8c8"></div><svg style="position:absolute;left:1838px;top:156px" width="26" height="16" viewBox="0 0 26 16"><g fill="#666"><rect x="6.3" y="0.5" width="3.4" height="15"/><rect x="0.5" y="6.3" width="15" height="3.4"/><rect x="6.3" y="0.5" width="3.4" height="15" transform="rotate(45 8 8)"/><rect x="6.3" y="0.5" width="3.4" height="15" transform="rotate(-45 8 8)"/></g><circle cx="8" cy="8" r="5" fill="#666"/><circle cx="8" cy="8" r="2" fill="#e8e8e8"/><path d="M18 7H23L20.5 10Z" fill="#666"/></svg><svg style="position:absolute;left:1868px;top:156px" width="20" height="16" viewBox="0 0 20 16"><rect x="14.5" y="0.8" width="3" height="14" fill="#e8e8e8" stroke="#6a6a6a" stroke-width="1.2"/><rect x="14.5" y="0.8" width="3" height="8" fill="#6a6a6a"/><path d="M1 5H11M11 5L8.2 2.5M11 5L8.2 7.5" stroke="#6a6a6a" stroke-width="1.2" fill="none"/></svg><svg style="position:absolute;left:1792px;top:529px" width="13" height="20" viewBox="0 0 13 20"><path d="M2.3 5A4 4 0 1 1 8.5 8.2C6.8 9.3 6.5 10.2 6.5 12.5" stroke="#999" stroke-width="3" fill="none"/><circle cx="6.5" cy="17" r="2" fill="#999"/></svg><svg style="position:absolute;left:1825px;top:529px" width="19" height="20" viewBox="0 0 19 20"><path d="M5 7.5H11.5A4.8 4.8 0 0 1 11.5 17H0.5" stroke="#999" stroke-width="3.2" fill="none"/><path d="M6 1.5L0 7.5L6 12.5Z" fill="#999"/></svg><svg style="position:absolute;left:1861px;top:530px" width="19" height="19" viewBox="0 0 19 19"><defs><linearGradient id="fn" x1="0" y1="0" x2="0" y2="1"><stop offset="0" stop-color="#5ab0dc"/><stop offset="1" stop-color="#3a8cc4"/></linearGradient></defs><path d="M0 1.5H18.5L11.5 8.5V12.5L6.5 17.5V8.5Z" fill="url(#fn)"/><path d="M1 3.8H17.5" stroke="#3a8cc4" stroke-width="1"/></svg><svg style="position:absolute;left:38px;top:1032px" width="16" height="16" viewBox="0 0 16 16"><rect x="0.5" y="0.5" width="15" height="15" fill="#f0c080" stroke="#d09040"/><rect x="3" y="4" width="10" height="7" fill="#c89050"/><path d="M4 6H12M4 8.5H12" stroke="#f4d8a8" stroke-width="0.8"/></svg><svg style="position:absolute;left:159px;top:1032px" width="16" height="16" viewBox="0 0 16 16"><rect x="0.5" y="0.5" width="15" height="15" fill="#555"/><rect x="2" y="3" width="12" height="11" fill="#fff"/><path d="M3.5 5.5L6 7.5L3.5 9.5M7 11H11" stroke="#333" stroke-width="1.2" fill="none"/></svg><svg style="position:absolute;left:260px;top:1031px" width="15" height="18" viewBox="0 0 15 18"><path d="M3 6.8A5.5 5.5 0 0 1 14 6.8Z" fill="#7cb82f"/><path d="M4.8 1.2L6.3 3.4M12.2 1.2L10.7 3.4" stroke="#7cb82f" stroke-width="1"/><path d="M3 8H14V14.5Q14 15.5 13 15.5H4Q3 15.5 3 14.5Z" fill="#7cb82f"/><rect x="0" y="8" width="2.2" height="6.2" rx="1.1" fill="#7cb82f"/><rect x="14.8" y="8" width="2.2" height="6.2" rx="1.1" fill="#7cb82f"/><rect x="5" y="14" width="2.4" height="4.5" rx="1.2" fill="#7cb82f"/><rect x="9.6" y="14" width="2.4" height="4.5" rx="1.2" fill="#7cb82f"/><circle cx="6.3" cy="4.9" r="0.8" fill="#fff"/><circle cx="10.7" cy="4.9" r="0.8" fill="#fff"/></svg><svg style="position:absolute;left:426px;top:1031px" width="20" height="18" viewBox="0 0 20 18"><circle cx="5" cy="5" r="4.3" fill="#fff" stroke="#888"/><path d="M3 5H7" stroke="#888"/><circle cx="12" cy="9" r="4" fill="#f0b070"/><rect x="8" y="6" width="8" height="2.5" fill="#555"/><path d="M6 18C6 14 8.5 13 12 13S18 14 18 18Z" fill="#3d9ad8"/></svg><svg style="position:absolute;left:1657px;top:1031px" width="16" height="16" viewBox="0 0 16 16"><path d="M1 1H15V11H8L4 15V11H1Z" fill="#aaa"/></svg><svg style="position:absolute;left:1769px;top:1032px" width="15" height="15" viewBox="0 0 15 15"><rect x="0.5" y="0.5" width="14" height="14" fill="#d8ecf8" stroke="#4a90c8"/><rect x="2.5" y="3" width="10" height="3" fill="#4a90c8"/><rect x="3.5" y="7.5" width="5" height="1.5" fill="#4a90c8"/></svg><svg style="position:absolute;left:9px;top:1058px" width="20" height="18" viewBox="0 0 20 18"><rect x="1" y="1" width="18" height="14" fill="#c8c8c8" stroke="#777" stroke-width="1.4"/><rect x="1" y="16" width="18" height="1.5" fill="#777"/></svg><svg style="position:absolute;left:1865px;top:1061px" width="13" height="16" viewBox="0 0 13 16"><path d="M3 7V4A3 3 0 0 1 9 4" stroke="#777" stroke-width="1.5" fill="none"/><rect x="3" y="7" width="9" height="7" fill="#fff" stroke="#777" stroke-width="1.5"/><rect x="6.5" y="9.5" width="2" height="2.5" fill="#777"/></svg><svg style="position:absolute;left:1895px;top:1056px" width="18" height="20" viewBox="0 0 18 20"><circle cx="9" cy="7" r="6" fill="#aaa"/><path d="M1 12H17V20H1Z" fill="#aaa"/><rect x="2" y="6" width="14" height="3" fill="#888"/></svg><div style="position:absolute;left:0px;top:1079px;width:1920px;height:1px;background:#5a5a5a"></div><div style="position:absolute;left:0px;top:1079px;width:68px;height:1px;background:#7fb0b0"></div><div style="position:absolute;left:1582px;top:1079px;width:338px;height:1px;background:#7fb0b0"></div>
</body></html>
